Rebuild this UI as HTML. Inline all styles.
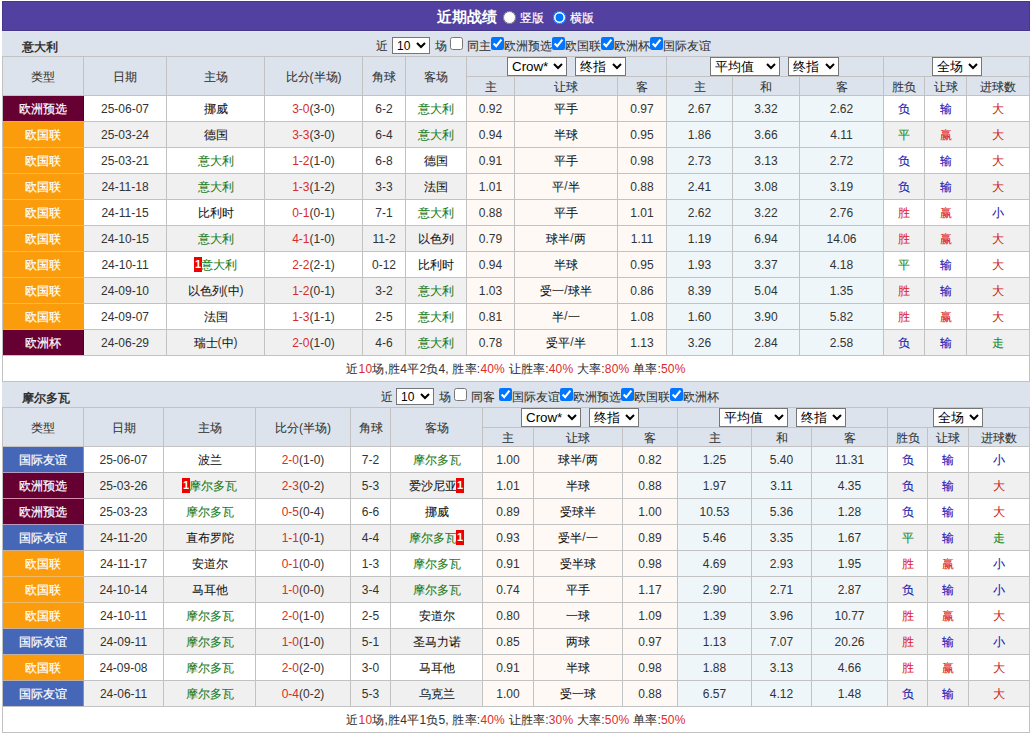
<!DOCTYPE html>
<html><head><meta charset="utf-8"><style>
html,body{margin:0;padding:0;background:#fff;width:1032px;height:734px;overflow:hidden;}
body{position:relative;font-family:'Liberation Sans', sans-serif;font-size:12px;color:#333;}
.b{position:absolute;box-sizing:border-box;white-space:nowrap;}
.k{-webkit-text-stroke:0.08px currentColor;}
.d{color:#151515;}
.dc .k{position:relative;top:1px;}
.w .k{-webkit-text-stroke:0.2px #fff;}
.s{position:absolute;margin:0;font-family:'Liberation Sans', sans-serif;font-size:13.33px;padding:0;box-sizing:border-box;background:#fff;}
.c{position:absolute;margin:0;width:13px;height:13px;}
.rc{display:inline-block;background:#ee0000;color:#fff;font-weight:bold;font-size:11px;line-height:15px;height:15px;width:8px;text-align:center;vertical-align:0px;position:relative;}
</style></head><body>
<div class="b" style="left:2px;top:1px;width:1028px;height:30px;background:#5241a0;border:1px solid #45388a;"></div>
<div class="b" style="left:437px;top:8px;font-size:15px;line-height:17px;font-weight:bold;color:#fff;-webkit-text-stroke:0;">近期战绩</div>
<input type="radio" class="c" style="left:503px;top:11px;">
<div class="b" style="left:520px;top:11px;font-size:12px;line-height:14px;color:#fff;-webkit-text-stroke:0.2px #fff;">竖版</div>
<input type="radio" checked class="c" style="left:553px;top:11px;">
<div class="b" style="left:570px;top:11px;font-size:12px;line-height:14px;color:#fff;-webkit-text-stroke:0.2px #fff;">横版</div>
<div class="b" style="left:2px;top:31px;width:1028px;height:25px;background:#dce3ec;"></div><div class="b" style="left:2px;top:31px;width:1028px;height:1px;background:#e4e6f6;"></div><div class="b" style="left:22px;top:40px;width:100px;height:14px;font-weight:bold;font-size:12px;color:#333;line-height:14px;-webkit-text-stroke:0;">意大利</div><div class="b" style="left:376px;top:39px;width:14px;height:14px;font-size:12px;line-height:14px;color:#333;"><span class="k">近</span></div><select class="s" style="left:392px;top:37px;width:38px;height:17px;font-size:12px;"><option>10</option></select><div class="b" style="left:435px;top:39px;width:14px;height:14px;font-size:12px;line-height:14px;color:#333;"><span class="k">场</span></div><input type="checkbox" class="c" style="left:450px;top:37px;"><div class="b" style="left:467px;top:39px;width:30px;height:14px;font-size:12px;line-height:14px;color:#333;"><span class="k">同主</span></div><input type="checkbox" checked class="c" style="left:491px;top:37px;"><div class="b" style="left:504px;top:39px;width:60px;height:14px;font-size:12px;line-height:14px;color:#333;"><span class="k">欧洲预选</span></div><input type="checkbox" checked class="c" style="left:552px;top:37px;"><div class="b" style="left:565px;top:39px;width:60px;height:14px;font-size:12px;line-height:14px;color:#333;"><span class="k">欧国联</span></div><input type="checkbox" checked class="c" style="left:601px;top:37px;"><div class="b" style="left:614px;top:39px;width:60px;height:14px;font-size:12px;line-height:14px;color:#333;"><span class="k">欧洲杯</span></div><input type="checkbox" checked class="c" style="left:650px;top:37px;"><div class="b" style="left:663px;top:39px;width:60px;height:14px;font-size:12px;line-height:14px;color:#333;"><span class="k">国际友谊</span></div><div class="b" style="left:2px;top:56px;width:1028px;height:39px;background:#dce3ec;"></div><div class="b" style="left:2px;top:56px;width:1028px;height:1px;background:#c2c2c2;"></div><div class="b" style="left:466px;top:76px;width:564px;height:1px;background:#c2c2c2;"></div><div class="b" style="left:2px;top:56px;width:1px;height:39px;background:#c2c2c2;"></div><div class="b" style="left:83px;top:56px;width:1px;height:39px;background:#c2c2c2;"></div><div class="b" style="left:166px;top:56px;width:1px;height:39px;background:#c2c2c2;"></div><div class="b" style="left:264px;top:56px;width:1px;height:39px;background:#c2c2c2;"></div><div class="b" style="left:362px;top:56px;width:1px;height:39px;background:#c2c2c2;"></div><div class="b" style="left:405px;top:56px;width:1px;height:39px;background:#c2c2c2;"></div><div class="b" style="left:466px;top:56px;width:1px;height:39px;background:#c2c2c2;"></div><div class="b" style="left:514px;top:76px;width:1px;height:19px;background:#c2c2c2;"></div><div class="b" style="left:617px;top:76px;width:1px;height:19px;background:#c2c2c2;"></div><div class="b" style="left:666px;top:56px;width:1px;height:39px;background:#c2c2c2;"></div><div class="b" style="left:732px;top:76px;width:1px;height:19px;background:#c2c2c2;"></div><div class="b" style="left:799px;top:76px;width:1px;height:19px;background:#c2c2c2;"></div><div class="b" style="left:883px;top:56px;width:1px;height:39px;background:#c2c2c2;"></div><div class="b" style="left:924px;top:76px;width:1px;height:19px;background:#c2c2c2;"></div><div class="b" style="left:966px;top:76px;width:1px;height:19px;background:#c2c2c2;"></div><div class="b" style="left:1029px;top:56px;width:1px;height:39px;background:#c2c2c2;"></div><div class="b" style="left:3px;top:58px;width:80px;height:38px;display:flex;align-items:center;justify-content:center;color:#333;font-size:12px;"><span><span class="k">类型</span></span></div><div class="b" style="left:84px;top:58px;width:82px;height:38px;display:flex;align-items:center;justify-content:center;color:#333;font-size:12px;"><span><span class="k">日期</span></span></div><div class="b" style="left:167px;top:58px;width:97px;height:38px;display:flex;align-items:center;justify-content:center;color:#333;font-size:12px;"><span><span class="k">主场</span></span></div><div class="b" style="left:265px;top:58px;width:97px;height:38px;display:flex;align-items:center;justify-content:center;color:#333;font-size:12px;"><span><span class="k">比分</span>(<span class="k">半场</span>)</span></div><div class="b" style="left:363px;top:58px;width:42px;height:38px;display:flex;align-items:center;justify-content:center;color:#333;font-size:12px;"><span><span class="k">角球</span></span></div><div class="b" style="left:406px;top:58px;width:60px;height:38px;display:flex;align-items:center;justify-content:center;color:#333;font-size:12px;"><span><span class="k">客场</span></span></div><select class="s hs" style="left:507px;top:57px;width:60px;height:19px;"><option>Crow*</option></select><select class="s hs" style="left:575px;top:57px;width:51px;height:19px;"><option>终指</option></select><select class="s hs" style="left:710px;top:57px;width:70px;height:19px;"><option>平均值</option></select><select class="s hs" style="left:788px;top:57px;width:51px;height:19px;"><option>终指</option></select><select class="s hs" style="left:932px;top:57px;width:50px;height:19px;"><option>全场</option></select><div class="b" style="left:467px;top:78px;width:47px;height:18px;display:flex;align-items:center;justify-content:center;color:#333;font-size:12px;"><span><span class="k">主</span></span></div><div class="b" style="left:515px;top:78px;width:102px;height:18px;display:flex;align-items:center;justify-content:center;color:#333;font-size:12px;"><span><span class="k">让球</span></span></div><div class="b" style="left:618px;top:78px;width:48px;height:18px;display:flex;align-items:center;justify-content:center;color:#333;font-size:12px;"><span><span class="k">客</span></span></div><div class="b" style="left:667px;top:78px;width:65px;height:18px;display:flex;align-items:center;justify-content:center;color:#333;font-size:12px;"><span><span class="k">主</span></span></div><div class="b" style="left:733px;top:78px;width:66px;height:18px;display:flex;align-items:center;justify-content:center;color:#333;font-size:12px;"><span><span class="k">和</span></span></div><div class="b" style="left:800px;top:78px;width:83px;height:18px;display:flex;align-items:center;justify-content:center;color:#333;font-size:12px;"><span><span class="k">客</span></span></div><div class="b" style="left:884px;top:78px;width:40px;height:18px;display:flex;align-items:center;justify-content:center;color:#333;font-size:12px;"><span><span class="k">胜负</span></span></div><div class="b" style="left:925px;top:78px;width:41px;height:18px;display:flex;align-items:center;justify-content:center;color:#333;font-size:12px;"><span><span class="k">让球</span></span></div><div class="b" style="left:967px;top:78px;width:62px;height:18px;display:flex;align-items:center;justify-content:center;color:#333;font-size:12px;"><span><span class="k">进球数</span></span></div><div class="b" style="left:2px;top:95px;width:1028px;height:1px;background:#c2c2c2;"></div><div class="b" style="left:2px;top:95px;width:1px;height:27px;background:#c2c2c2;"></div><div class="b" style="left:83px;top:95px;width:1px;height:27px;background:#c2c2c2;"></div><div class="b" style="left:166px;top:95px;width:1px;height:27px;background:#c2c2c2;"></div><div class="b" style="left:264px;top:95px;width:1px;height:27px;background:#c2c2c2;"></div><div class="b" style="left:362px;top:95px;width:1px;height:27px;background:#c2c2c2;"></div><div class="b" style="left:405px;top:95px;width:1px;height:27px;background:#c2c2c2;"></div><div class="b" style="left:466px;top:95px;width:1px;height:27px;background:#c2c2c2;"></div><div class="b" style="left:514px;top:95px;width:1px;height:27px;background:#c2c2c2;"></div><div class="b" style="left:617px;top:95px;width:1px;height:27px;background:#c2c2c2;"></div><div class="b" style="left:666px;top:95px;width:1px;height:27px;background:#c2c2c2;"></div><div class="b" style="left:732px;top:95px;width:1px;height:27px;background:#c2c2c2;"></div><div class="b" style="left:799px;top:95px;width:1px;height:27px;background:#c2c2c2;"></div><div class="b" style="left:883px;top:95px;width:1px;height:27px;background:#c2c2c2;"></div><div class="b" style="left:924px;top:95px;width:1px;height:27px;background:#c2c2c2;"></div><div class="b" style="left:966px;top:95px;width:1px;height:27px;background:#c2c2c2;"></div><div class="b" style="left:1029px;top:95px;width:1px;height:27px;background:#c2c2c2;"></div><div class="b dc w" style="left:3px;top:96px;width:80px;height:25px;background:#660033;color:#fff;display:flex;align-items:center;justify-content:center;font-size:12px;-webkit-text-stroke:0.25px #fff;"><span><span class="k">欧洲预选</span></span></div><div class="b" style="left:83px;top:96px;width:1px;height:25px;background:#4a0026;"></div><div class="b dc" style="left:84px;top:96px;width:82px;height:25px;background:#ffffff;color:#333;display:flex;align-items:center;justify-content:center;font-size:12px;"><span>25-06-07</span></div><div class="b dc" style="left:167px;top:96px;width:97px;height:25px;background:#ffffff;color:#333;display:flex;align-items:center;justify-content:center;font-size:12px;"><span><span style="color:#333"><span class="k d">挪威</span></span></span></div><div class="b dc" style="left:265px;top:96px;width:97px;height:25px;background:#ffffff;color:#333;display:flex;align-items:center;justify-content:center;font-size:12px;"><span><span style="color:#d82c2c">3-0</span>(3-0)</span></div><div class="b dc" style="left:363px;top:96px;width:42px;height:25px;background:#ffffff;color:#333;display:flex;align-items:center;justify-content:center;font-size:12px;"><span>6-2</span></div><div class="b dc" style="left:406px;top:96px;width:60px;height:25px;background:#ffffff;color:#333;display:flex;align-items:center;justify-content:center;font-size:12px;"><span><span style="color:#1a7a1a"><span class="k">意大利</span></span></span></div><div class="b dc" style="left:467px;top:96px;width:47px;height:25px;background:#fef9f5;color:#333;display:flex;align-items:center;justify-content:center;font-size:12px;"><span>0.92</span></div><div class="b dc" style="left:515px;top:96px;width:102px;height:25px;background:#fef9f5;color:#333;display:flex;align-items:center;justify-content:center;font-size:12px;"><span><span class="k d">平手</span></span></div><div class="b dc" style="left:618px;top:96px;width:48px;height:25px;background:#fef9f5;color:#333;display:flex;align-items:center;justify-content:center;font-size:12px;"><span>0.97</span></div><div class="b dc" style="left:667px;top:96px;width:65px;height:25px;background:#eff6fa;color:#333;display:flex;align-items:center;justify-content:center;font-size:12px;"><span>2.67</span></div><div class="b dc" style="left:733px;top:96px;width:66px;height:25px;background:#eff6fa;color:#333;display:flex;align-items:center;justify-content:center;font-size:12px;"><span>3.32</span></div><div class="b dc" style="left:800px;top:96px;width:83px;height:25px;background:#eff6fa;color:#333;display:flex;align-items:center;justify-content:center;font-size:12px;"><span>2.62</span></div><div class="b dc" style="left:884px;top:96px;width:40px;height:25px;background:#ffffff;color:#1111aa;display:flex;align-items:center;justify-content:center;font-size:12px;"><span><span class="k">负</span></span></div><div class="b dc" style="left:925px;top:96px;width:41px;height:25px;background:#ffffff;color:#1111bb;display:flex;align-items:center;justify-content:center;font-size:12px;"><span><span class="k">输</span></span></div><div class="b dc" style="left:967px;top:96px;width:62px;height:25px;background:#ffffff;color:#cc2222;display:flex;align-items:center;justify-content:center;font-size:12px;"><span><span class="k">大</span></span></div><div class="b" style="left:2px;top:121px;width:1028px;height:1px;background:#c2c2c2;"></div><div class="b" style="left:2px;top:121px;width:1px;height:27px;background:#c2c2c2;"></div><div class="b" style="left:83px;top:121px;width:1px;height:27px;background:#c2c2c2;"></div><div class="b" style="left:166px;top:121px;width:1px;height:27px;background:#c2c2c2;"></div><div class="b" style="left:264px;top:121px;width:1px;height:27px;background:#c2c2c2;"></div><div class="b" style="left:362px;top:121px;width:1px;height:27px;background:#c2c2c2;"></div><div class="b" style="left:405px;top:121px;width:1px;height:27px;background:#c2c2c2;"></div><div class="b" style="left:466px;top:121px;width:1px;height:27px;background:#c2c2c2;"></div><div class="b" style="left:514px;top:121px;width:1px;height:27px;background:#c2c2c2;"></div><div class="b" style="left:617px;top:121px;width:1px;height:27px;background:#c2c2c2;"></div><div class="b" style="left:666px;top:121px;width:1px;height:27px;background:#c2c2c2;"></div><div class="b" style="left:732px;top:121px;width:1px;height:27px;background:#c2c2c2;"></div><div class="b" style="left:799px;top:121px;width:1px;height:27px;background:#c2c2c2;"></div><div class="b" style="left:883px;top:121px;width:1px;height:27px;background:#c2c2c2;"></div><div class="b" style="left:924px;top:121px;width:1px;height:27px;background:#c2c2c2;"></div><div class="b" style="left:966px;top:121px;width:1px;height:27px;background:#c2c2c2;"></div><div class="b" style="left:1029px;top:121px;width:1px;height:27px;background:#c2c2c2;"></div><div class="b dc w" style="left:3px;top:122px;width:80px;height:25px;background:#fa9c0c;color:#fff;display:flex;align-items:center;justify-content:center;font-size:12px;-webkit-text-stroke:0.25px #fff;"><span><span class="k">欧国联</span></span></div><div class="b" style="left:83px;top:122px;width:1px;height:25px;background:#dba050;"></div><div class="b" style="left:3px;top:121px;width:81px;height:1px;background:#e4a285;"></div><div class="b dc" style="left:84px;top:122px;width:82px;height:25px;background:#f0f0f0;color:#333;display:flex;align-items:center;justify-content:center;font-size:12px;"><span>25-03-24</span></div><div class="b dc" style="left:167px;top:122px;width:97px;height:25px;background:#f0f0f0;color:#333;display:flex;align-items:center;justify-content:center;font-size:12px;"><span><span style="color:#333"><span class="k d">德国</span></span></span></div><div class="b dc" style="left:265px;top:122px;width:97px;height:25px;background:#f0f0f0;color:#333;display:flex;align-items:center;justify-content:center;font-size:12px;"><span><span style="color:#d82c2c">3-3</span>(3-0)</span></div><div class="b dc" style="left:363px;top:122px;width:42px;height:25px;background:#f0f0f0;color:#333;display:flex;align-items:center;justify-content:center;font-size:12px;"><span>6-4</span></div><div class="b dc" style="left:406px;top:122px;width:60px;height:25px;background:#f0f0f0;color:#333;display:flex;align-items:center;justify-content:center;font-size:12px;"><span><span style="color:#1a7a1a"><span class="k">意大利</span></span></span></div><div class="b dc" style="left:467px;top:122px;width:47px;height:25px;background:#fef9f5;color:#333;display:flex;align-items:center;justify-content:center;font-size:12px;"><span>0.94</span></div><div class="b dc" style="left:515px;top:122px;width:102px;height:25px;background:#fef9f5;color:#333;display:flex;align-items:center;justify-content:center;font-size:12px;"><span><span class="k d">半球</span></span></div><div class="b dc" style="left:618px;top:122px;width:48px;height:25px;background:#fef9f5;color:#333;display:flex;align-items:center;justify-content:center;font-size:12px;"><span>0.95</span></div><div class="b dc" style="left:667px;top:122px;width:65px;height:25px;background:#eff6fa;color:#333;display:flex;align-items:center;justify-content:center;font-size:12px;"><span>1.86</span></div><div class="b dc" style="left:733px;top:122px;width:66px;height:25px;background:#eff6fa;color:#333;display:flex;align-items:center;justify-content:center;font-size:12px;"><span>3.66</span></div><div class="b dc" style="left:800px;top:122px;width:83px;height:25px;background:#eff6fa;color:#333;display:flex;align-items:center;justify-content:center;font-size:12px;"><span>4.11</span></div><div class="b dc" style="left:884px;top:122px;width:40px;height:25px;background:#f0f0f0;color:#178817;display:flex;align-items:center;justify-content:center;font-size:12px;"><span><span class="k">平</span></span></div><div class="b dc" style="left:925px;top:122px;width:41px;height:25px;background:#f0f0f0;color:#dd2222;display:flex;align-items:center;justify-content:center;font-size:12px;"><span><span class="k">赢</span></span></div><div class="b dc" style="left:967px;top:122px;width:62px;height:25px;background:#f0f0f0;color:#cc2222;display:flex;align-items:center;justify-content:center;font-size:12px;"><span><span class="k">大</span></span></div><div class="b" style="left:2px;top:147px;width:1028px;height:1px;background:#c2c2c2;"></div><div class="b" style="left:2px;top:147px;width:1px;height:27px;background:#c2c2c2;"></div><div class="b" style="left:83px;top:147px;width:1px;height:27px;background:#c2c2c2;"></div><div class="b" style="left:166px;top:147px;width:1px;height:27px;background:#c2c2c2;"></div><div class="b" style="left:264px;top:147px;width:1px;height:27px;background:#c2c2c2;"></div><div class="b" style="left:362px;top:147px;width:1px;height:27px;background:#c2c2c2;"></div><div class="b" style="left:405px;top:147px;width:1px;height:27px;background:#c2c2c2;"></div><div class="b" style="left:466px;top:147px;width:1px;height:27px;background:#c2c2c2;"></div><div class="b" style="left:514px;top:147px;width:1px;height:27px;background:#c2c2c2;"></div><div class="b" style="left:617px;top:147px;width:1px;height:27px;background:#c2c2c2;"></div><div class="b" style="left:666px;top:147px;width:1px;height:27px;background:#c2c2c2;"></div><div class="b" style="left:732px;top:147px;width:1px;height:27px;background:#c2c2c2;"></div><div class="b" style="left:799px;top:147px;width:1px;height:27px;background:#c2c2c2;"></div><div class="b" style="left:883px;top:147px;width:1px;height:27px;background:#c2c2c2;"></div><div class="b" style="left:924px;top:147px;width:1px;height:27px;background:#c2c2c2;"></div><div class="b" style="left:966px;top:147px;width:1px;height:27px;background:#c2c2c2;"></div><div class="b" style="left:1029px;top:147px;width:1px;height:27px;background:#c2c2c2;"></div><div class="b dc w" style="left:3px;top:148px;width:80px;height:25px;background:#fa9c0c;color:#fff;display:flex;align-items:center;justify-content:center;font-size:12px;-webkit-text-stroke:0.25px #fff;"><span><span class="k">欧国联</span></span></div><div class="b" style="left:83px;top:148px;width:1px;height:25px;background:#dba050;"></div><div class="b" style="left:3px;top:147px;width:81px;height:1px;background:#f0b860;"></div><div class="b dc" style="left:84px;top:148px;width:82px;height:25px;background:#ffffff;color:#333;display:flex;align-items:center;justify-content:center;font-size:12px;"><span>25-03-21</span></div><div class="b dc" style="left:167px;top:148px;width:97px;height:25px;background:#ffffff;color:#333;display:flex;align-items:center;justify-content:center;font-size:12px;"><span><span style="color:#1a7a1a"><span class="k">意大利</span></span></span></div><div class="b dc" style="left:265px;top:148px;width:97px;height:25px;background:#ffffff;color:#333;display:flex;align-items:center;justify-content:center;font-size:12px;"><span><span style="color:#d82c2c">1-2</span>(1-0)</span></div><div class="b dc" style="left:363px;top:148px;width:42px;height:25px;background:#ffffff;color:#333;display:flex;align-items:center;justify-content:center;font-size:12px;"><span>6-8</span></div><div class="b dc" style="left:406px;top:148px;width:60px;height:25px;background:#ffffff;color:#333;display:flex;align-items:center;justify-content:center;font-size:12px;"><span><span style="color:#333"><span class="k d">德国</span></span></span></div><div class="b dc" style="left:467px;top:148px;width:47px;height:25px;background:#fef9f5;color:#333;display:flex;align-items:center;justify-content:center;font-size:12px;"><span>0.91</span></div><div class="b dc" style="left:515px;top:148px;width:102px;height:25px;background:#fef9f5;color:#333;display:flex;align-items:center;justify-content:center;font-size:12px;"><span><span class="k d">平手</span></span></div><div class="b dc" style="left:618px;top:148px;width:48px;height:25px;background:#fef9f5;color:#333;display:flex;align-items:center;justify-content:center;font-size:12px;"><span>0.98</span></div><div class="b dc" style="left:667px;top:148px;width:65px;height:25px;background:#eff6fa;color:#333;display:flex;align-items:center;justify-content:center;font-size:12px;"><span>2.73</span></div><div class="b dc" style="left:733px;top:148px;width:66px;height:25px;background:#eff6fa;color:#333;display:flex;align-items:center;justify-content:center;font-size:12px;"><span>3.13</span></div><div class="b dc" style="left:800px;top:148px;width:83px;height:25px;background:#eff6fa;color:#333;display:flex;align-items:center;justify-content:center;font-size:12px;"><span>2.72</span></div><div class="b dc" style="left:884px;top:148px;width:40px;height:25px;background:#ffffff;color:#1111aa;display:flex;align-items:center;justify-content:center;font-size:12px;"><span><span class="k">负</span></span></div><div class="b dc" style="left:925px;top:148px;width:41px;height:25px;background:#ffffff;color:#1111bb;display:flex;align-items:center;justify-content:center;font-size:12px;"><span><span class="k">输</span></span></div><div class="b dc" style="left:967px;top:148px;width:62px;height:25px;background:#ffffff;color:#cc2222;display:flex;align-items:center;justify-content:center;font-size:12px;"><span><span class="k">大</span></span></div><div class="b" style="left:2px;top:173px;width:1028px;height:1px;background:#c2c2c2;"></div><div class="b" style="left:2px;top:173px;width:1px;height:27px;background:#c2c2c2;"></div><div class="b" style="left:83px;top:173px;width:1px;height:27px;background:#c2c2c2;"></div><div class="b" style="left:166px;top:173px;width:1px;height:27px;background:#c2c2c2;"></div><div class="b" style="left:264px;top:173px;width:1px;height:27px;background:#c2c2c2;"></div><div class="b" style="left:362px;top:173px;width:1px;height:27px;background:#c2c2c2;"></div><div class="b" style="left:405px;top:173px;width:1px;height:27px;background:#c2c2c2;"></div><div class="b" style="left:466px;top:173px;width:1px;height:27px;background:#c2c2c2;"></div><div class="b" style="left:514px;top:173px;width:1px;height:27px;background:#c2c2c2;"></div><div class="b" style="left:617px;top:173px;width:1px;height:27px;background:#c2c2c2;"></div><div class="b" style="left:666px;top:173px;width:1px;height:27px;background:#c2c2c2;"></div><div class="b" style="left:732px;top:173px;width:1px;height:27px;background:#c2c2c2;"></div><div class="b" style="left:799px;top:173px;width:1px;height:27px;background:#c2c2c2;"></div><div class="b" style="left:883px;top:173px;width:1px;height:27px;background:#c2c2c2;"></div><div class="b" style="left:924px;top:173px;width:1px;height:27px;background:#c2c2c2;"></div><div class="b" style="left:966px;top:173px;width:1px;height:27px;background:#c2c2c2;"></div><div class="b" style="left:1029px;top:173px;width:1px;height:27px;background:#c2c2c2;"></div><div class="b dc w" style="left:3px;top:174px;width:80px;height:25px;background:#fa9c0c;color:#fff;display:flex;align-items:center;justify-content:center;font-size:12px;-webkit-text-stroke:0.25px #fff;"><span><span class="k">欧国联</span></span></div><div class="b" style="left:83px;top:174px;width:1px;height:25px;background:#dba050;"></div><div class="b" style="left:3px;top:173px;width:81px;height:1px;background:#f0b860;"></div><div class="b dc" style="left:84px;top:174px;width:82px;height:25px;background:#f0f0f0;color:#333;display:flex;align-items:center;justify-content:center;font-size:12px;"><span>24-11-18</span></div><div class="b dc" style="left:167px;top:174px;width:97px;height:25px;background:#f0f0f0;color:#333;display:flex;align-items:center;justify-content:center;font-size:12px;"><span><span style="color:#1a7a1a"><span class="k">意大利</span></span></span></div><div class="b dc" style="left:265px;top:174px;width:97px;height:25px;background:#f0f0f0;color:#333;display:flex;align-items:center;justify-content:center;font-size:12px;"><span><span style="color:#d82c2c">1-3</span>(1-2)</span></div><div class="b dc" style="left:363px;top:174px;width:42px;height:25px;background:#f0f0f0;color:#333;display:flex;align-items:center;justify-content:center;font-size:12px;"><span>3-3</span></div><div class="b dc" style="left:406px;top:174px;width:60px;height:25px;background:#f0f0f0;color:#333;display:flex;align-items:center;justify-content:center;font-size:12px;"><span><span style="color:#333"><span class="k d">法国</span></span></span></div><div class="b dc" style="left:467px;top:174px;width:47px;height:25px;background:#fef9f5;color:#333;display:flex;align-items:center;justify-content:center;font-size:12px;"><span>1.01</span></div><div class="b dc" style="left:515px;top:174px;width:102px;height:25px;background:#fef9f5;color:#333;display:flex;align-items:center;justify-content:center;font-size:12px;"><span><span class="k d">平</span>/<span class="k d">半</span></span></div><div class="b dc" style="left:618px;top:174px;width:48px;height:25px;background:#fef9f5;color:#333;display:flex;align-items:center;justify-content:center;font-size:12px;"><span>0.88</span></div><div class="b dc" style="left:667px;top:174px;width:65px;height:25px;background:#eff6fa;color:#333;display:flex;align-items:center;justify-content:center;font-size:12px;"><span>2.41</span></div><div class="b dc" style="left:733px;top:174px;width:66px;height:25px;background:#eff6fa;color:#333;display:flex;align-items:center;justify-content:center;font-size:12px;"><span>3.08</span></div><div class="b dc" style="left:800px;top:174px;width:83px;height:25px;background:#eff6fa;color:#333;display:flex;align-items:center;justify-content:center;font-size:12px;"><span>3.19</span></div><div class="b dc" style="left:884px;top:174px;width:40px;height:25px;background:#f0f0f0;color:#1111aa;display:flex;align-items:center;justify-content:center;font-size:12px;"><span><span class="k">负</span></span></div><div class="b dc" style="left:925px;top:174px;width:41px;height:25px;background:#f0f0f0;color:#1111bb;display:flex;align-items:center;justify-content:center;font-size:12px;"><span><span class="k">输</span></span></div><div class="b dc" style="left:967px;top:174px;width:62px;height:25px;background:#f0f0f0;color:#cc2222;display:flex;align-items:center;justify-content:center;font-size:12px;"><span><span class="k">大</span></span></div><div class="b" style="left:2px;top:199px;width:1028px;height:1px;background:#c2c2c2;"></div><div class="b" style="left:2px;top:199px;width:1px;height:27px;background:#c2c2c2;"></div><div class="b" style="left:83px;top:199px;width:1px;height:27px;background:#c2c2c2;"></div><div class="b" style="left:166px;top:199px;width:1px;height:27px;background:#c2c2c2;"></div><div class="b" style="left:264px;top:199px;width:1px;height:27px;background:#c2c2c2;"></div><div class="b" style="left:362px;top:199px;width:1px;height:27px;background:#c2c2c2;"></div><div class="b" style="left:405px;top:199px;width:1px;height:27px;background:#c2c2c2;"></div><div class="b" style="left:466px;top:199px;width:1px;height:27px;background:#c2c2c2;"></div><div class="b" style="left:514px;top:199px;width:1px;height:27px;background:#c2c2c2;"></div><div class="b" style="left:617px;top:199px;width:1px;height:27px;background:#c2c2c2;"></div><div class="b" style="left:666px;top:199px;width:1px;height:27px;background:#c2c2c2;"></div><div class="b" style="left:732px;top:199px;width:1px;height:27px;background:#c2c2c2;"></div><div class="b" style="left:799px;top:199px;width:1px;height:27px;background:#c2c2c2;"></div><div class="b" style="left:883px;top:199px;width:1px;height:27px;background:#c2c2c2;"></div><div class="b" style="left:924px;top:199px;width:1px;height:27px;background:#c2c2c2;"></div><div class="b" style="left:966px;top:199px;width:1px;height:27px;background:#c2c2c2;"></div><div class="b" style="left:1029px;top:199px;width:1px;height:27px;background:#c2c2c2;"></div><div class="b dc w" style="left:3px;top:200px;width:80px;height:25px;background:#fa9c0c;color:#fff;display:flex;align-items:center;justify-content:center;font-size:12px;-webkit-text-stroke:0.25px #fff;"><span><span class="k">欧国联</span></span></div><div class="b" style="left:83px;top:200px;width:1px;height:25px;background:#dba050;"></div><div class="b" style="left:3px;top:199px;width:81px;height:1px;background:#f0b860;"></div><div class="b dc" style="left:84px;top:200px;width:82px;height:25px;background:#ffffff;color:#333;display:flex;align-items:center;justify-content:center;font-size:12px;"><span>24-11-15</span></div><div class="b dc" style="left:167px;top:200px;width:97px;height:25px;background:#ffffff;color:#333;display:flex;align-items:center;justify-content:center;font-size:12px;"><span><span style="color:#333"><span class="k d">比利时</span></span></span></div><div class="b dc" style="left:265px;top:200px;width:97px;height:25px;background:#ffffff;color:#333;display:flex;align-items:center;justify-content:center;font-size:12px;"><span><span style="color:#d82c2c">0-1</span>(0-1)</span></div><div class="b dc" style="left:363px;top:200px;width:42px;height:25px;background:#ffffff;color:#333;display:flex;align-items:center;justify-content:center;font-size:12px;"><span>7-1</span></div><div class="b dc" style="left:406px;top:200px;width:60px;height:25px;background:#ffffff;color:#333;display:flex;align-items:center;justify-content:center;font-size:12px;"><span><span style="color:#1a7a1a"><span class="k">意大利</span></span></span></div><div class="b dc" style="left:467px;top:200px;width:47px;height:25px;background:#fef9f5;color:#333;display:flex;align-items:center;justify-content:center;font-size:12px;"><span>0.88</span></div><div class="b dc" style="left:515px;top:200px;width:102px;height:25px;background:#fef9f5;color:#333;display:flex;align-items:center;justify-content:center;font-size:12px;"><span><span class="k d">平手</span></span></div><div class="b dc" style="left:618px;top:200px;width:48px;height:25px;background:#fef9f5;color:#333;display:flex;align-items:center;justify-content:center;font-size:12px;"><span>1.01</span></div><div class="b dc" style="left:667px;top:200px;width:65px;height:25px;background:#eff6fa;color:#333;display:flex;align-items:center;justify-content:center;font-size:12px;"><span>2.62</span></div><div class="b dc" style="left:733px;top:200px;width:66px;height:25px;background:#eff6fa;color:#333;display:flex;align-items:center;justify-content:center;font-size:12px;"><span>3.22</span></div><div class="b dc" style="left:800px;top:200px;width:83px;height:25px;background:#eff6fa;color:#333;display:flex;align-items:center;justify-content:center;font-size:12px;"><span>2.76</span></div><div class="b dc" style="left:884px;top:200px;width:40px;height:25px;background:#ffffff;color:#dd2222;display:flex;align-items:center;justify-content:center;font-size:12px;"><span><span class="k">胜</span></span></div><div class="b dc" style="left:925px;top:200px;width:41px;height:25px;background:#ffffff;color:#dd2222;display:flex;align-items:center;justify-content:center;font-size:12px;"><span><span class="k">赢</span></span></div><div class="b dc" style="left:967px;top:200px;width:62px;height:25px;background:#ffffff;color:#1111aa;display:flex;align-items:center;justify-content:center;font-size:12px;"><span><span class="k">小</span></span></div><div class="b" style="left:2px;top:225px;width:1028px;height:1px;background:#c2c2c2;"></div><div class="b" style="left:2px;top:225px;width:1px;height:27px;background:#c2c2c2;"></div><div class="b" style="left:83px;top:225px;width:1px;height:27px;background:#c2c2c2;"></div><div class="b" style="left:166px;top:225px;width:1px;height:27px;background:#c2c2c2;"></div><div class="b" style="left:264px;top:225px;width:1px;height:27px;background:#c2c2c2;"></div><div class="b" style="left:362px;top:225px;width:1px;height:27px;background:#c2c2c2;"></div><div class="b" style="left:405px;top:225px;width:1px;height:27px;background:#c2c2c2;"></div><div class="b" style="left:466px;top:225px;width:1px;height:27px;background:#c2c2c2;"></div><div class="b" style="left:514px;top:225px;width:1px;height:27px;background:#c2c2c2;"></div><div class="b" style="left:617px;top:225px;width:1px;height:27px;background:#c2c2c2;"></div><div class="b" style="left:666px;top:225px;width:1px;height:27px;background:#c2c2c2;"></div><div class="b" style="left:732px;top:225px;width:1px;height:27px;background:#c2c2c2;"></div><div class="b" style="left:799px;top:225px;width:1px;height:27px;background:#c2c2c2;"></div><div class="b" style="left:883px;top:225px;width:1px;height:27px;background:#c2c2c2;"></div><div class="b" style="left:924px;top:225px;width:1px;height:27px;background:#c2c2c2;"></div><div class="b" style="left:966px;top:225px;width:1px;height:27px;background:#c2c2c2;"></div><div class="b" style="left:1029px;top:225px;width:1px;height:27px;background:#c2c2c2;"></div><div class="b dc w" style="left:3px;top:226px;width:80px;height:25px;background:#fa9c0c;color:#fff;display:flex;align-items:center;justify-content:center;font-size:12px;-webkit-text-stroke:0.25px #fff;"><span><span class="k">欧国联</span></span></div><div class="b" style="left:83px;top:226px;width:1px;height:25px;background:#dba050;"></div><div class="b" style="left:3px;top:225px;width:81px;height:1px;background:#f0b860;"></div><div class="b dc" style="left:84px;top:226px;width:82px;height:25px;background:#f0f0f0;color:#333;display:flex;align-items:center;justify-content:center;font-size:12px;"><span>24-10-15</span></div><div class="b dc" style="left:167px;top:226px;width:97px;height:25px;background:#f0f0f0;color:#333;display:flex;align-items:center;justify-content:center;font-size:12px;"><span><span style="color:#1a7a1a"><span class="k">意大利</span></span></span></div><div class="b dc" style="left:265px;top:226px;width:97px;height:25px;background:#f0f0f0;color:#333;display:flex;align-items:center;justify-content:center;font-size:12px;"><span><span style="color:#d82c2c">4-1</span>(1-0)</span></div><div class="b dc" style="left:363px;top:226px;width:42px;height:25px;background:#f0f0f0;color:#333;display:flex;align-items:center;justify-content:center;font-size:12px;"><span>11-2</span></div><div class="b dc" style="left:406px;top:226px;width:60px;height:25px;background:#f0f0f0;color:#333;display:flex;align-items:center;justify-content:center;font-size:12px;"><span><span style="color:#333"><span class="k d">以色列</span></span></span></div><div class="b dc" style="left:467px;top:226px;width:47px;height:25px;background:#fef9f5;color:#333;display:flex;align-items:center;justify-content:center;font-size:12px;"><span>0.79</span></div><div class="b dc" style="left:515px;top:226px;width:102px;height:25px;background:#fef9f5;color:#333;display:flex;align-items:center;justify-content:center;font-size:12px;"><span><span class="k d">球半</span>/<span class="k d">两</span></span></div><div class="b dc" style="left:618px;top:226px;width:48px;height:25px;background:#fef9f5;color:#333;display:flex;align-items:center;justify-content:center;font-size:12px;"><span>1.11</span></div><div class="b dc" style="left:667px;top:226px;width:65px;height:25px;background:#eff6fa;color:#333;display:flex;align-items:center;justify-content:center;font-size:12px;"><span>1.19</span></div><div class="b dc" style="left:733px;top:226px;width:66px;height:25px;background:#eff6fa;color:#333;display:flex;align-items:center;justify-content:center;font-size:12px;"><span>6.94</span></div><div class="b dc" style="left:800px;top:226px;width:83px;height:25px;background:#eff6fa;color:#333;display:flex;align-items:center;justify-content:center;font-size:12px;"><span>14.06</span></div><div class="b dc" style="left:884px;top:226px;width:40px;height:25px;background:#f0f0f0;color:#dd2222;display:flex;align-items:center;justify-content:center;font-size:12px;"><span><span class="k">胜</span></span></div><div class="b dc" style="left:925px;top:226px;width:41px;height:25px;background:#f0f0f0;color:#dd2222;display:flex;align-items:center;justify-content:center;font-size:12px;"><span><span class="k">赢</span></span></div><div class="b dc" style="left:967px;top:226px;width:62px;height:25px;background:#f0f0f0;color:#cc2222;display:flex;align-items:center;justify-content:center;font-size:12px;"><span><span class="k">大</span></span></div><div class="b" style="left:2px;top:251px;width:1028px;height:1px;background:#c2c2c2;"></div><div class="b" style="left:2px;top:251px;width:1px;height:27px;background:#c2c2c2;"></div><div class="b" style="left:83px;top:251px;width:1px;height:27px;background:#c2c2c2;"></div><div class="b" style="left:166px;top:251px;width:1px;height:27px;background:#c2c2c2;"></div><div class="b" style="left:264px;top:251px;width:1px;height:27px;background:#c2c2c2;"></div><div class="b" style="left:362px;top:251px;width:1px;height:27px;background:#c2c2c2;"></div><div class="b" style="left:405px;top:251px;width:1px;height:27px;background:#c2c2c2;"></div><div class="b" style="left:466px;top:251px;width:1px;height:27px;background:#c2c2c2;"></div><div class="b" style="left:514px;top:251px;width:1px;height:27px;background:#c2c2c2;"></div><div class="b" style="left:617px;top:251px;width:1px;height:27px;background:#c2c2c2;"></div><div class="b" style="left:666px;top:251px;width:1px;height:27px;background:#c2c2c2;"></div><div class="b" style="left:732px;top:251px;width:1px;height:27px;background:#c2c2c2;"></div><div class="b" style="left:799px;top:251px;width:1px;height:27px;background:#c2c2c2;"></div><div class="b" style="left:883px;top:251px;width:1px;height:27px;background:#c2c2c2;"></div><div class="b" style="left:924px;top:251px;width:1px;height:27px;background:#c2c2c2;"></div><div class="b" style="left:966px;top:251px;width:1px;height:27px;background:#c2c2c2;"></div><div class="b" style="left:1029px;top:251px;width:1px;height:27px;background:#c2c2c2;"></div><div class="b dc w" style="left:3px;top:252px;width:80px;height:25px;background:#fa9c0c;color:#fff;display:flex;align-items:center;justify-content:center;font-size:12px;-webkit-text-stroke:0.25px #fff;"><span><span class="k">欧国联</span></span></div><div class="b" style="left:83px;top:252px;width:1px;height:25px;background:#dba050;"></div><div class="b" style="left:3px;top:251px;width:81px;height:1px;background:#f0b860;"></div><div class="b dc" style="left:84px;top:252px;width:82px;height:25px;background:#ffffff;color:#333;display:flex;align-items:center;justify-content:center;font-size:12px;"><span>24-10-11</span></div><div class="b dc" style="left:167px;top:252px;width:97px;height:25px;background:#ffffff;color:#333;display:flex;align-items:center;justify-content:center;font-size:12px;"><span><span class="rc" style="margin-right:-1px">1</span><span style="color:#1a7a1a"><span class="k">意大利</span></span></span></div><div class="b dc" style="left:265px;top:252px;width:97px;height:25px;background:#ffffff;color:#333;display:flex;align-items:center;justify-content:center;font-size:12px;"><span><span style="color:#d82c2c">2-2</span>(2-1)</span></div><div class="b dc" style="left:363px;top:252px;width:42px;height:25px;background:#ffffff;color:#333;display:flex;align-items:center;justify-content:center;font-size:12px;"><span>0-12</span></div><div class="b dc" style="left:406px;top:252px;width:60px;height:25px;background:#ffffff;color:#333;display:flex;align-items:center;justify-content:center;font-size:12px;"><span><span style="color:#333"><span class="k d">比利时</span></span></span></div><div class="b dc" style="left:467px;top:252px;width:47px;height:25px;background:#fef9f5;color:#333;display:flex;align-items:center;justify-content:center;font-size:12px;"><span>0.94</span></div><div class="b dc" style="left:515px;top:252px;width:102px;height:25px;background:#fef9f5;color:#333;display:flex;align-items:center;justify-content:center;font-size:12px;"><span><span class="k d">半球</span></span></div><div class="b dc" style="left:618px;top:252px;width:48px;height:25px;background:#fef9f5;color:#333;display:flex;align-items:center;justify-content:center;font-size:12px;"><span>0.95</span></div><div class="b dc" style="left:667px;top:252px;width:65px;height:25px;background:#eff6fa;color:#333;display:flex;align-items:center;justify-content:center;font-size:12px;"><span>1.93</span></div><div class="b dc" style="left:733px;top:252px;width:66px;height:25px;background:#eff6fa;color:#333;display:flex;align-items:center;justify-content:center;font-size:12px;"><span>3.37</span></div><div class="b dc" style="left:800px;top:252px;width:83px;height:25px;background:#eff6fa;color:#333;display:flex;align-items:center;justify-content:center;font-size:12px;"><span>4.18</span></div><div class="b dc" style="left:884px;top:252px;width:40px;height:25px;background:#ffffff;color:#178817;display:flex;align-items:center;justify-content:center;font-size:12px;"><span><span class="k">平</span></span></div><div class="b dc" style="left:925px;top:252px;width:41px;height:25px;background:#ffffff;color:#1111bb;display:flex;align-items:center;justify-content:center;font-size:12px;"><span><span class="k">输</span></span></div><div class="b dc" style="left:967px;top:252px;width:62px;height:25px;background:#ffffff;color:#cc2222;display:flex;align-items:center;justify-content:center;font-size:12px;"><span><span class="k">大</span></span></div><div class="b" style="left:2px;top:277px;width:1028px;height:1px;background:#c2c2c2;"></div><div class="b" style="left:2px;top:277px;width:1px;height:27px;background:#c2c2c2;"></div><div class="b" style="left:83px;top:277px;width:1px;height:27px;background:#c2c2c2;"></div><div class="b" style="left:166px;top:277px;width:1px;height:27px;background:#c2c2c2;"></div><div class="b" style="left:264px;top:277px;width:1px;height:27px;background:#c2c2c2;"></div><div class="b" style="left:362px;top:277px;width:1px;height:27px;background:#c2c2c2;"></div><div class="b" style="left:405px;top:277px;width:1px;height:27px;background:#c2c2c2;"></div><div class="b" style="left:466px;top:277px;width:1px;height:27px;background:#c2c2c2;"></div><div class="b" style="left:514px;top:277px;width:1px;height:27px;background:#c2c2c2;"></div><div class="b" style="left:617px;top:277px;width:1px;height:27px;background:#c2c2c2;"></div><div class="b" style="left:666px;top:277px;width:1px;height:27px;background:#c2c2c2;"></div><div class="b" style="left:732px;top:277px;width:1px;height:27px;background:#c2c2c2;"></div><div class="b" style="left:799px;top:277px;width:1px;height:27px;background:#c2c2c2;"></div><div class="b" style="left:883px;top:277px;width:1px;height:27px;background:#c2c2c2;"></div><div class="b" style="left:924px;top:277px;width:1px;height:27px;background:#c2c2c2;"></div><div class="b" style="left:966px;top:277px;width:1px;height:27px;background:#c2c2c2;"></div><div class="b" style="left:1029px;top:277px;width:1px;height:27px;background:#c2c2c2;"></div><div class="b dc w" style="left:3px;top:278px;width:80px;height:25px;background:#fa9c0c;color:#fff;display:flex;align-items:center;justify-content:center;font-size:12px;-webkit-text-stroke:0.25px #fff;"><span><span class="k">欧国联</span></span></div><div class="b" style="left:83px;top:278px;width:1px;height:25px;background:#dba050;"></div><div class="b" style="left:3px;top:277px;width:81px;height:1px;background:#f0b860;"></div><div class="b dc" style="left:84px;top:278px;width:82px;height:25px;background:#f0f0f0;color:#333;display:flex;align-items:center;justify-content:center;font-size:12px;"><span>24-09-10</span></div><div class="b dc" style="left:167px;top:278px;width:97px;height:25px;background:#f0f0f0;color:#333;display:flex;align-items:center;justify-content:center;font-size:12px;"><span><span style="color:#333"><span class="k d">以色列</span>(<span class="k d">中</span>)</span></span></div><div class="b dc" style="left:265px;top:278px;width:97px;height:25px;background:#f0f0f0;color:#333;display:flex;align-items:center;justify-content:center;font-size:12px;"><span><span style="color:#d82c2c">1-2</span>(0-1)</span></div><div class="b dc" style="left:363px;top:278px;width:42px;height:25px;background:#f0f0f0;color:#333;display:flex;align-items:center;justify-content:center;font-size:12px;"><span>3-2</span></div><div class="b dc" style="left:406px;top:278px;width:60px;height:25px;background:#f0f0f0;color:#333;display:flex;align-items:center;justify-content:center;font-size:12px;"><span><span style="color:#1a7a1a"><span class="k">意大利</span></span></span></div><div class="b dc" style="left:467px;top:278px;width:47px;height:25px;background:#fef9f5;color:#333;display:flex;align-items:center;justify-content:center;font-size:12px;"><span>1.03</span></div><div class="b dc" style="left:515px;top:278px;width:102px;height:25px;background:#fef9f5;color:#333;display:flex;align-items:center;justify-content:center;font-size:12px;"><span><span class="k d">受一</span>/<span class="k d">球半</span></span></div><div class="b dc" style="left:618px;top:278px;width:48px;height:25px;background:#fef9f5;color:#333;display:flex;align-items:center;justify-content:center;font-size:12px;"><span>0.86</span></div><div class="b dc" style="left:667px;top:278px;width:65px;height:25px;background:#eff6fa;color:#333;display:flex;align-items:center;justify-content:center;font-size:12px;"><span>8.39</span></div><div class="b dc" style="left:733px;top:278px;width:66px;height:25px;background:#eff6fa;color:#333;display:flex;align-items:center;justify-content:center;font-size:12px;"><span>5.04</span></div><div class="b dc" style="left:800px;top:278px;width:83px;height:25px;background:#eff6fa;color:#333;display:flex;align-items:center;justify-content:center;font-size:12px;"><span>1.35</span></div><div class="b dc" style="left:884px;top:278px;width:40px;height:25px;background:#f0f0f0;color:#dd2222;display:flex;align-items:center;justify-content:center;font-size:12px;"><span><span class="k">胜</span></span></div><div class="b dc" style="left:925px;top:278px;width:41px;height:25px;background:#f0f0f0;color:#1111bb;display:flex;align-items:center;justify-content:center;font-size:12px;"><span><span class="k">输</span></span></div><div class="b dc" style="left:967px;top:278px;width:62px;height:25px;background:#f0f0f0;color:#cc2222;display:flex;align-items:center;justify-content:center;font-size:12px;"><span><span class="k">大</span></span></div><div class="b" style="left:2px;top:303px;width:1028px;height:1px;background:#c2c2c2;"></div><div class="b" style="left:2px;top:303px;width:1px;height:27px;background:#c2c2c2;"></div><div class="b" style="left:83px;top:303px;width:1px;height:27px;background:#c2c2c2;"></div><div class="b" style="left:166px;top:303px;width:1px;height:27px;background:#c2c2c2;"></div><div class="b" style="left:264px;top:303px;width:1px;height:27px;background:#c2c2c2;"></div><div class="b" style="left:362px;top:303px;width:1px;height:27px;background:#c2c2c2;"></div><div class="b" style="left:405px;top:303px;width:1px;height:27px;background:#c2c2c2;"></div><div class="b" style="left:466px;top:303px;width:1px;height:27px;background:#c2c2c2;"></div><div class="b" style="left:514px;top:303px;width:1px;height:27px;background:#c2c2c2;"></div><div class="b" style="left:617px;top:303px;width:1px;height:27px;background:#c2c2c2;"></div><div class="b" style="left:666px;top:303px;width:1px;height:27px;background:#c2c2c2;"></div><div class="b" style="left:732px;top:303px;width:1px;height:27px;background:#c2c2c2;"></div><div class="b" style="left:799px;top:303px;width:1px;height:27px;background:#c2c2c2;"></div><div class="b" style="left:883px;top:303px;width:1px;height:27px;background:#c2c2c2;"></div><div class="b" style="left:924px;top:303px;width:1px;height:27px;background:#c2c2c2;"></div><div class="b" style="left:966px;top:303px;width:1px;height:27px;background:#c2c2c2;"></div><div class="b" style="left:1029px;top:303px;width:1px;height:27px;background:#c2c2c2;"></div><div class="b dc w" style="left:3px;top:304px;width:80px;height:25px;background:#fa9c0c;color:#fff;display:flex;align-items:center;justify-content:center;font-size:12px;-webkit-text-stroke:0.25px #fff;"><span><span class="k">欧国联</span></span></div><div class="b" style="left:83px;top:304px;width:1px;height:25px;background:#dba050;"></div><div class="b" style="left:3px;top:303px;width:81px;height:1px;background:#f0b860;"></div><div class="b dc" style="left:84px;top:304px;width:82px;height:25px;background:#ffffff;color:#333;display:flex;align-items:center;justify-content:center;font-size:12px;"><span>24-09-07</span></div><div class="b dc" style="left:167px;top:304px;width:97px;height:25px;background:#ffffff;color:#333;display:flex;align-items:center;justify-content:center;font-size:12px;"><span><span style="color:#333"><span class="k d">法国</span></span></span></div><div class="b dc" style="left:265px;top:304px;width:97px;height:25px;background:#ffffff;color:#333;display:flex;align-items:center;justify-content:center;font-size:12px;"><span><span style="color:#d82c2c">1-3</span>(1-1)</span></div><div class="b dc" style="left:363px;top:304px;width:42px;height:25px;background:#ffffff;color:#333;display:flex;align-items:center;justify-content:center;font-size:12px;"><span>2-5</span></div><div class="b dc" style="left:406px;top:304px;width:60px;height:25px;background:#ffffff;color:#333;display:flex;align-items:center;justify-content:center;font-size:12px;"><span><span style="color:#1a7a1a"><span class="k">意大利</span></span></span></div><div class="b dc" style="left:467px;top:304px;width:47px;height:25px;background:#fef9f5;color:#333;display:flex;align-items:center;justify-content:center;font-size:12px;"><span>0.81</span></div><div class="b dc" style="left:515px;top:304px;width:102px;height:25px;background:#fef9f5;color:#333;display:flex;align-items:center;justify-content:center;font-size:12px;"><span><span class="k d">半</span>/<span class="k d">一</span></span></div><div class="b dc" style="left:618px;top:304px;width:48px;height:25px;background:#fef9f5;color:#333;display:flex;align-items:center;justify-content:center;font-size:12px;"><span>1.08</span></div><div class="b dc" style="left:667px;top:304px;width:65px;height:25px;background:#eff6fa;color:#333;display:flex;align-items:center;justify-content:center;font-size:12px;"><span>1.60</span></div><div class="b dc" style="left:733px;top:304px;width:66px;height:25px;background:#eff6fa;color:#333;display:flex;align-items:center;justify-content:center;font-size:12px;"><span>3.90</span></div><div class="b dc" style="left:800px;top:304px;width:83px;height:25px;background:#eff6fa;color:#333;display:flex;align-items:center;justify-content:center;font-size:12px;"><span>5.82</span></div><div class="b dc" style="left:884px;top:304px;width:40px;height:25px;background:#ffffff;color:#dd2222;display:flex;align-items:center;justify-content:center;font-size:12px;"><span><span class="k">胜</span></span></div><div class="b dc" style="left:925px;top:304px;width:41px;height:25px;background:#ffffff;color:#dd2222;display:flex;align-items:center;justify-content:center;font-size:12px;"><span><span class="k">赢</span></span></div><div class="b dc" style="left:967px;top:304px;width:62px;height:25px;background:#ffffff;color:#cc2222;display:flex;align-items:center;justify-content:center;font-size:12px;"><span><span class="k">大</span></span></div><div class="b" style="left:2px;top:329px;width:1028px;height:1px;background:#c2c2c2;"></div><div class="b" style="left:2px;top:329px;width:1px;height:27px;background:#c2c2c2;"></div><div class="b" style="left:83px;top:329px;width:1px;height:27px;background:#c2c2c2;"></div><div class="b" style="left:166px;top:329px;width:1px;height:27px;background:#c2c2c2;"></div><div class="b" style="left:264px;top:329px;width:1px;height:27px;background:#c2c2c2;"></div><div class="b" style="left:362px;top:329px;width:1px;height:27px;background:#c2c2c2;"></div><div class="b" style="left:405px;top:329px;width:1px;height:27px;background:#c2c2c2;"></div><div class="b" style="left:466px;top:329px;width:1px;height:27px;background:#c2c2c2;"></div><div class="b" style="left:514px;top:329px;width:1px;height:27px;background:#c2c2c2;"></div><div class="b" style="left:617px;top:329px;width:1px;height:27px;background:#c2c2c2;"></div><div class="b" style="left:666px;top:329px;width:1px;height:27px;background:#c2c2c2;"></div><div class="b" style="left:732px;top:329px;width:1px;height:27px;background:#c2c2c2;"></div><div class="b" style="left:799px;top:329px;width:1px;height:27px;background:#c2c2c2;"></div><div class="b" style="left:883px;top:329px;width:1px;height:27px;background:#c2c2c2;"></div><div class="b" style="left:924px;top:329px;width:1px;height:27px;background:#c2c2c2;"></div><div class="b" style="left:966px;top:329px;width:1px;height:27px;background:#c2c2c2;"></div><div class="b" style="left:1029px;top:329px;width:1px;height:27px;background:#c2c2c2;"></div><div class="b dc w" style="left:3px;top:330px;width:80px;height:25px;background:#660033;color:#fff;display:flex;align-items:center;justify-content:center;font-size:12px;-webkit-text-stroke:0.25px #fff;"><span><span class="k">欧洲杯</span></span></div><div class="b" style="left:83px;top:330px;width:1px;height:25px;background:#4a0026;"></div><div class="b" style="left:3px;top:329px;width:81px;height:1px;background:#e4a285;"></div><div class="b dc" style="left:84px;top:330px;width:82px;height:25px;background:#f0f0f0;color:#333;display:flex;align-items:center;justify-content:center;font-size:12px;"><span>24-06-29</span></div><div class="b dc" style="left:167px;top:330px;width:97px;height:25px;background:#f0f0f0;color:#333;display:flex;align-items:center;justify-content:center;font-size:12px;"><span><span style="color:#333"><span class="k d">瑞士</span>(<span class="k d">中</span>)</span></span></div><div class="b dc" style="left:265px;top:330px;width:97px;height:25px;background:#f0f0f0;color:#333;display:flex;align-items:center;justify-content:center;font-size:12px;"><span><span style="color:#d82c2c">2-0</span>(1-0)</span></div><div class="b dc" style="left:363px;top:330px;width:42px;height:25px;background:#f0f0f0;color:#333;display:flex;align-items:center;justify-content:center;font-size:12px;"><span>4-6</span></div><div class="b dc" style="left:406px;top:330px;width:60px;height:25px;background:#f0f0f0;color:#333;display:flex;align-items:center;justify-content:center;font-size:12px;"><span><span style="color:#1a7a1a"><span class="k">意大利</span></span></span></div><div class="b dc" style="left:467px;top:330px;width:47px;height:25px;background:#fef9f5;color:#333;display:flex;align-items:center;justify-content:center;font-size:12px;"><span>0.78</span></div><div class="b dc" style="left:515px;top:330px;width:102px;height:25px;background:#fef9f5;color:#333;display:flex;align-items:center;justify-content:center;font-size:12px;"><span><span class="k d">受平</span>/<span class="k d">半</span></span></div><div class="b dc" style="left:618px;top:330px;width:48px;height:25px;background:#fef9f5;color:#333;display:flex;align-items:center;justify-content:center;font-size:12px;"><span>1.13</span></div><div class="b dc" style="left:667px;top:330px;width:65px;height:25px;background:#eff6fa;color:#333;display:flex;align-items:center;justify-content:center;font-size:12px;"><span>3.26</span></div><div class="b dc" style="left:733px;top:330px;width:66px;height:25px;background:#eff6fa;color:#333;display:flex;align-items:center;justify-content:center;font-size:12px;"><span>2.84</span></div><div class="b dc" style="left:800px;top:330px;width:83px;height:25px;background:#eff6fa;color:#333;display:flex;align-items:center;justify-content:center;font-size:12px;"><span>2.58</span></div><div class="b dc" style="left:884px;top:330px;width:40px;height:25px;background:#f0f0f0;color:#1111aa;display:flex;align-items:center;justify-content:center;font-size:12px;"><span><span class="k">负</span></span></div><div class="b dc" style="left:925px;top:330px;width:41px;height:25px;background:#f0f0f0;color:#1111bb;display:flex;align-items:center;justify-content:center;font-size:12px;"><span><span class="k">输</span></span></div><div class="b dc" style="left:967px;top:330px;width:62px;height:25px;background:#f0f0f0;color:#178817;display:flex;align-items:center;justify-content:center;font-size:12px;"><span><span class="k">走</span></span></div><div class="b" style="left:2px;top:355px;width:1028px;height:1px;background:#c2c2c2;"></div><div class="b" style="left:2px;top:356px;width:1028px;height:25px;background:#fff;"></div><div class="b" style="left:2px;top:355px;width:1px;height:27px;background:#c2c2c2;"></div><div class="b" style="left:1029px;top:355px;width:1px;height:27px;background:#c2c2c2;"></div><div class="b" style="left:2px;top:381px;width:1028px;height:1px;background:#c2c2c2;"></div><div class="b" style="left:2px;top:357px;width:1028px;height:25px;display:flex;align-items:center;justify-content:center;color:#333;font-size:12px;letter-spacing:0.2px;"><span><span class="k">近</span><span style="color:#dd2a2a">10</span><span class="k">场</span>,<span class="k">胜</span>4<span class="k">平</span>2<span class="k">负</span>4, <span class="k">胜率</span>:<span style="color:#dd2a2a">40%</span> <span class="k">让胜率</span>:<span style="color:#dd2a2a">40%</span> <span class="k">大率</span>:<span style="color:#dd2a2a">80%</span> <span class="k">单率</span>:<span style="color:#dd2a2a">50%</span></span></div><div class="b" style="left:2px;top:382px;width:1028px;height:25px;background:#dce3ec;"></div><div class="b" style="left:22px;top:391px;width:100px;height:14px;font-weight:bold;font-size:12px;color:#333;line-height:14px;-webkit-text-stroke:0;">摩尔多瓦</div><div class="b" style="left:381px;top:390px;width:14px;height:14px;font-size:12px;line-height:14px;color:#333;"><span class="k">近</span></div><select class="s" style="left:396px;top:388px;width:38px;height:17px;font-size:12px;"><option>10</option></select><div class="b" style="left:439px;top:390px;width:14px;height:14px;font-size:12px;line-height:14px;color:#333;"><span class="k">场</span></div><input type="checkbox" class="c" style="left:454px;top:388px;"><div class="b" style="left:471px;top:390px;width:30px;height:14px;font-size:12px;line-height:14px;color:#333;"><span class="k">同客</span></div><input type="checkbox" checked class="c" style="left:499px;top:388px;"><div class="b" style="left:512px;top:390px;width:60px;height:14px;font-size:12px;line-height:14px;color:#333;"><span class="k">国际友谊</span></div><input type="checkbox" checked class="c" style="left:560px;top:388px;"><div class="b" style="left:573px;top:390px;width:60px;height:14px;font-size:12px;line-height:14px;color:#333;"><span class="k">欧洲预选</span></div><input type="checkbox" checked class="c" style="left:621px;top:388px;"><div class="b" style="left:634px;top:390px;width:60px;height:14px;font-size:12px;line-height:14px;color:#333;"><span class="k">欧国联</span></div><input type="checkbox" checked class="c" style="left:670px;top:388px;"><div class="b" style="left:683px;top:390px;width:60px;height:14px;font-size:12px;line-height:14px;color:#333;"><span class="k">欧洲杯</span></div><div class="b" style="left:2px;top:407px;width:1028px;height:39px;background:#dce3ec;"></div><div class="b" style="left:2px;top:407px;width:1028px;height:1px;background:#c2c2c2;"></div><div class="b" style="left:482px;top:427px;width:548px;height:1px;background:#c2c2c2;"></div><div class="b" style="left:2px;top:407px;width:1px;height:39px;background:#c2c2c2;"></div><div class="b" style="left:83px;top:407px;width:1px;height:39px;background:#c2c2c2;"></div><div class="b" style="left:163px;top:407px;width:1px;height:39px;background:#c2c2c2;"></div><div class="b" style="left:255px;top:407px;width:1px;height:39px;background:#c2c2c2;"></div><div class="b" style="left:350px;top:407px;width:1px;height:39px;background:#c2c2c2;"></div><div class="b" style="left:390px;top:407px;width:1px;height:39px;background:#c2c2c2;"></div><div class="b" style="left:482px;top:407px;width:1px;height:39px;background:#c2c2c2;"></div><div class="b" style="left:533px;top:427px;width:1px;height:19px;background:#c2c2c2;"></div><div class="b" style="left:622px;top:427px;width:1px;height:19px;background:#c2c2c2;"></div><div class="b" style="left:677px;top:407px;width:1px;height:39px;background:#c2c2c2;"></div><div class="b" style="left:751px;top:427px;width:1px;height:19px;background:#c2c2c2;"></div><div class="b" style="left:811px;top:427px;width:1px;height:19px;background:#c2c2c2;"></div><div class="b" style="left:887px;top:407px;width:1px;height:39px;background:#c2c2c2;"></div><div class="b" style="left:927px;top:427px;width:1px;height:19px;background:#c2c2c2;"></div><div class="b" style="left:968px;top:427px;width:1px;height:19px;background:#c2c2c2;"></div><div class="b" style="left:1029px;top:407px;width:1px;height:39px;background:#c2c2c2;"></div><div class="b" style="left:3px;top:409px;width:80px;height:38px;display:flex;align-items:center;justify-content:center;color:#333;font-size:12px;"><span><span class="k">类型</span></span></div><div class="b" style="left:84px;top:409px;width:79px;height:38px;display:flex;align-items:center;justify-content:center;color:#333;font-size:12px;"><span><span class="k">日期</span></span></div><div class="b" style="left:164px;top:409px;width:91px;height:38px;display:flex;align-items:center;justify-content:center;color:#333;font-size:12px;"><span><span class="k">主场</span></span></div><div class="b" style="left:256px;top:409px;width:94px;height:38px;display:flex;align-items:center;justify-content:center;color:#333;font-size:12px;"><span><span class="k">比分</span>(<span class="k">半场</span>)</span></div><div class="b" style="left:351px;top:409px;width:39px;height:38px;display:flex;align-items:center;justify-content:center;color:#333;font-size:12px;"><span><span class="k">角球</span></span></div><div class="b" style="left:391px;top:409px;width:91px;height:38px;display:flex;align-items:center;justify-content:center;color:#333;font-size:12px;"><span><span class="k">客场</span></span></div><select class="s hs" style="left:521px;top:408px;width:60px;height:19px;"><option>Crow*</option></select><select class="s hs" style="left:589px;top:408px;width:50px;height:19px;"><option>终指</option></select><select class="s hs" style="left:719px;top:408px;width:69px;height:19px;"><option>平均值</option></select><select class="s hs" style="left:796px;top:408px;width:50px;height:19px;"><option>终指</option></select><select class="s hs" style="left:933px;top:408px;width:50px;height:19px;"><option>全场</option></select><div class="b" style="left:483px;top:429px;width:50px;height:18px;display:flex;align-items:center;justify-content:center;color:#333;font-size:12px;"><span><span class="k">主</span></span></div><div class="b" style="left:534px;top:429px;width:88px;height:18px;display:flex;align-items:center;justify-content:center;color:#333;font-size:12px;"><span><span class="k">让球</span></span></div><div class="b" style="left:623px;top:429px;width:54px;height:18px;display:flex;align-items:center;justify-content:center;color:#333;font-size:12px;"><span><span class="k">客</span></span></div><div class="b" style="left:678px;top:429px;width:73px;height:18px;display:flex;align-items:center;justify-content:center;color:#333;font-size:12px;"><span><span class="k">主</span></span></div><div class="b" style="left:752px;top:429px;width:59px;height:18px;display:flex;align-items:center;justify-content:center;color:#333;font-size:12px;"><span><span class="k">和</span></span></div><div class="b" style="left:812px;top:429px;width:75px;height:18px;display:flex;align-items:center;justify-content:center;color:#333;font-size:12px;"><span><span class="k">客</span></span></div><div class="b" style="left:888px;top:429px;width:39px;height:18px;display:flex;align-items:center;justify-content:center;color:#333;font-size:12px;"><span><span class="k">胜负</span></span></div><div class="b" style="left:928px;top:429px;width:40px;height:18px;display:flex;align-items:center;justify-content:center;color:#333;font-size:12px;"><span><span class="k">让球</span></span></div><div class="b" style="left:969px;top:429px;width:60px;height:18px;display:flex;align-items:center;justify-content:center;color:#333;font-size:12px;"><span><span class="k">进球数</span></span></div><div class="b" style="left:2px;top:446px;width:1028px;height:1px;background:#c2c2c2;"></div><div class="b" style="left:2px;top:446px;width:1px;height:27px;background:#c2c2c2;"></div><div class="b" style="left:83px;top:446px;width:1px;height:27px;background:#c2c2c2;"></div><div class="b" style="left:163px;top:446px;width:1px;height:27px;background:#c2c2c2;"></div><div class="b" style="left:255px;top:446px;width:1px;height:27px;background:#c2c2c2;"></div><div class="b" style="left:350px;top:446px;width:1px;height:27px;background:#c2c2c2;"></div><div class="b" style="left:390px;top:446px;width:1px;height:27px;background:#c2c2c2;"></div><div class="b" style="left:482px;top:446px;width:1px;height:27px;background:#c2c2c2;"></div><div class="b" style="left:533px;top:446px;width:1px;height:27px;background:#c2c2c2;"></div><div class="b" style="left:622px;top:446px;width:1px;height:27px;background:#c2c2c2;"></div><div class="b" style="left:677px;top:446px;width:1px;height:27px;background:#c2c2c2;"></div><div class="b" style="left:751px;top:446px;width:1px;height:27px;background:#c2c2c2;"></div><div class="b" style="left:811px;top:446px;width:1px;height:27px;background:#c2c2c2;"></div><div class="b" style="left:887px;top:446px;width:1px;height:27px;background:#c2c2c2;"></div><div class="b" style="left:927px;top:446px;width:1px;height:27px;background:#c2c2c2;"></div><div class="b" style="left:968px;top:446px;width:1px;height:27px;background:#c2c2c2;"></div><div class="b" style="left:1029px;top:446px;width:1px;height:27px;background:#c2c2c2;"></div><div class="b dc w" style="left:3px;top:447px;width:80px;height:25px;background:#4666b8;color:#fff;display:flex;align-items:center;justify-content:center;font-size:12px;-webkit-text-stroke:0.25px #fff;"><span><span class="k">国际友谊</span></span></div><div class="b" style="left:83px;top:447px;width:1px;height:25px;background:#8090c0;"></div><div class="b dc" style="left:84px;top:447px;width:79px;height:25px;background:#ffffff;color:#333;display:flex;align-items:center;justify-content:center;font-size:12px;"><span>25-06-07</span></div><div class="b dc" style="left:164px;top:447px;width:91px;height:25px;background:#ffffff;color:#333;display:flex;align-items:center;justify-content:center;font-size:12px;"><span><span style="color:#333"><span class="k d">波兰</span></span></span></div><div class="b dc" style="left:256px;top:447px;width:94px;height:25px;background:#ffffff;color:#333;display:flex;align-items:center;justify-content:center;font-size:12px;"><span><span style="color:#d82c2c">2-0</span>(1-0)</span></div><div class="b dc" style="left:351px;top:447px;width:39px;height:25px;background:#ffffff;color:#333;display:flex;align-items:center;justify-content:center;font-size:12px;"><span>7-2</span></div><div class="b dc" style="left:391px;top:447px;width:91px;height:25px;background:#ffffff;color:#333;display:flex;align-items:center;justify-content:center;font-size:12px;"><span><span style="color:#1a7a1a"><span class="k">摩尔多瓦</span></span></span></div><div class="b dc" style="left:483px;top:447px;width:50px;height:25px;background:#fef9f5;color:#333;display:flex;align-items:center;justify-content:center;font-size:12px;"><span>1.00</span></div><div class="b dc" style="left:534px;top:447px;width:88px;height:25px;background:#fef9f5;color:#333;display:flex;align-items:center;justify-content:center;font-size:12px;"><span><span class="k d">球半</span>/<span class="k d">两</span></span></div><div class="b dc" style="left:623px;top:447px;width:54px;height:25px;background:#fef9f5;color:#333;display:flex;align-items:center;justify-content:center;font-size:12px;"><span>0.82</span></div><div class="b dc" style="left:678px;top:447px;width:73px;height:25px;background:#eff6fa;color:#333;display:flex;align-items:center;justify-content:center;font-size:12px;"><span>1.25</span></div><div class="b dc" style="left:752px;top:447px;width:59px;height:25px;background:#eff6fa;color:#333;display:flex;align-items:center;justify-content:center;font-size:12px;"><span>5.40</span></div><div class="b dc" style="left:812px;top:447px;width:75px;height:25px;background:#eff6fa;color:#333;display:flex;align-items:center;justify-content:center;font-size:12px;"><span>11.31</span></div><div class="b dc" style="left:888px;top:447px;width:39px;height:25px;background:#ffffff;color:#1111aa;display:flex;align-items:center;justify-content:center;font-size:12px;"><span><span class="k">负</span></span></div><div class="b dc" style="left:928px;top:447px;width:40px;height:25px;background:#ffffff;color:#1111bb;display:flex;align-items:center;justify-content:center;font-size:12px;"><span><span class="k">输</span></span></div><div class="b dc" style="left:969px;top:447px;width:60px;height:25px;background:#ffffff;color:#1111aa;display:flex;align-items:center;justify-content:center;font-size:12px;"><span><span class="k">小</span></span></div><div class="b" style="left:2px;top:472px;width:1028px;height:1px;background:#c2c2c2;"></div><div class="b" style="left:2px;top:472px;width:1px;height:27px;background:#c2c2c2;"></div><div class="b" style="left:83px;top:472px;width:1px;height:27px;background:#c2c2c2;"></div><div class="b" style="left:163px;top:472px;width:1px;height:27px;background:#c2c2c2;"></div><div class="b" style="left:255px;top:472px;width:1px;height:27px;background:#c2c2c2;"></div><div class="b" style="left:350px;top:472px;width:1px;height:27px;background:#c2c2c2;"></div><div class="b" style="left:390px;top:472px;width:1px;height:27px;background:#c2c2c2;"></div><div class="b" style="left:482px;top:472px;width:1px;height:27px;background:#c2c2c2;"></div><div class="b" style="left:533px;top:472px;width:1px;height:27px;background:#c2c2c2;"></div><div class="b" style="left:622px;top:472px;width:1px;height:27px;background:#c2c2c2;"></div><div class="b" style="left:677px;top:472px;width:1px;height:27px;background:#c2c2c2;"></div><div class="b" style="left:751px;top:472px;width:1px;height:27px;background:#c2c2c2;"></div><div class="b" style="left:811px;top:472px;width:1px;height:27px;background:#c2c2c2;"></div><div class="b" style="left:887px;top:472px;width:1px;height:27px;background:#c2c2c2;"></div><div class="b" style="left:927px;top:472px;width:1px;height:27px;background:#c2c2c2;"></div><div class="b" style="left:968px;top:472px;width:1px;height:27px;background:#c2c2c2;"></div><div class="b" style="left:1029px;top:472px;width:1px;height:27px;background:#c2c2c2;"></div><div class="b dc w" style="left:3px;top:473px;width:80px;height:25px;background:#660033;color:#fff;display:flex;align-items:center;justify-content:center;font-size:12px;-webkit-text-stroke:0.25px #fff;"><span><span class="k">欧洲预选</span></span></div><div class="b" style="left:83px;top:473px;width:1px;height:25px;background:#4a0026;"></div><div class="b" style="left:3px;top:472px;width:81px;height:1px;background:#b79bc0;"></div><div class="b dc" style="left:84px;top:473px;width:79px;height:25px;background:#f0f0f0;color:#333;display:flex;align-items:center;justify-content:center;font-size:12px;"><span>25-03-26</span></div><div class="b dc" style="left:164px;top:473px;width:91px;height:25px;background:#f0f0f0;color:#333;display:flex;align-items:center;justify-content:center;font-size:12px;"><span><span class="rc" style="margin-right:-1px">1</span><span style="color:#1a7a1a"><span class="k">摩尔多瓦</span></span></span></div><div class="b dc" style="left:256px;top:473px;width:94px;height:25px;background:#f0f0f0;color:#333;display:flex;align-items:center;justify-content:center;font-size:12px;"><span><span style="color:#d82c2c">2-3</span>(0-2)</span></div><div class="b dc" style="left:351px;top:473px;width:39px;height:25px;background:#f0f0f0;color:#333;display:flex;align-items:center;justify-content:center;font-size:12px;"><span>5-3</span></div><div class="b dc" style="left:391px;top:473px;width:91px;height:25px;background:#f0f0f0;color:#333;display:flex;align-items:center;justify-content:center;font-size:12px;"><span><span style="color:#333"><span class="k d">爱沙尼亚</span></span><span class="rc" style="margin-left:-1px">1</span></span></div><div class="b dc" style="left:483px;top:473px;width:50px;height:25px;background:#fef9f5;color:#333;display:flex;align-items:center;justify-content:center;font-size:12px;"><span>1.01</span></div><div class="b dc" style="left:534px;top:473px;width:88px;height:25px;background:#fef9f5;color:#333;display:flex;align-items:center;justify-content:center;font-size:12px;"><span><span class="k d">半球</span></span></div><div class="b dc" style="left:623px;top:473px;width:54px;height:25px;background:#fef9f5;color:#333;display:flex;align-items:center;justify-content:center;font-size:12px;"><span>0.88</span></div><div class="b dc" style="left:678px;top:473px;width:73px;height:25px;background:#eff6fa;color:#333;display:flex;align-items:center;justify-content:center;font-size:12px;"><span>1.97</span></div><div class="b dc" style="left:752px;top:473px;width:59px;height:25px;background:#eff6fa;color:#333;display:flex;align-items:center;justify-content:center;font-size:12px;"><span>3.11</span></div><div class="b dc" style="left:812px;top:473px;width:75px;height:25px;background:#eff6fa;color:#333;display:flex;align-items:center;justify-content:center;font-size:12px;"><span>4.35</span></div><div class="b dc" style="left:888px;top:473px;width:39px;height:25px;background:#f0f0f0;color:#1111aa;display:flex;align-items:center;justify-content:center;font-size:12px;"><span><span class="k">负</span></span></div><div class="b dc" style="left:928px;top:473px;width:40px;height:25px;background:#f0f0f0;color:#1111bb;display:flex;align-items:center;justify-content:center;font-size:12px;"><span><span class="k">输</span></span></div><div class="b dc" style="left:969px;top:473px;width:60px;height:25px;background:#f0f0f0;color:#cc2222;display:flex;align-items:center;justify-content:center;font-size:12px;"><span><span class="k">大</span></span></div><div class="b" style="left:2px;top:498px;width:1028px;height:1px;background:#c2c2c2;"></div><div class="b" style="left:2px;top:498px;width:1px;height:27px;background:#c2c2c2;"></div><div class="b" style="left:83px;top:498px;width:1px;height:27px;background:#c2c2c2;"></div><div class="b" style="left:163px;top:498px;width:1px;height:27px;background:#c2c2c2;"></div><div class="b" style="left:255px;top:498px;width:1px;height:27px;background:#c2c2c2;"></div><div class="b" style="left:350px;top:498px;width:1px;height:27px;background:#c2c2c2;"></div><div class="b" style="left:390px;top:498px;width:1px;height:27px;background:#c2c2c2;"></div><div class="b" style="left:482px;top:498px;width:1px;height:27px;background:#c2c2c2;"></div><div class="b" style="left:533px;top:498px;width:1px;height:27px;background:#c2c2c2;"></div><div class="b" style="left:622px;top:498px;width:1px;height:27px;background:#c2c2c2;"></div><div class="b" style="left:677px;top:498px;width:1px;height:27px;background:#c2c2c2;"></div><div class="b" style="left:751px;top:498px;width:1px;height:27px;background:#c2c2c2;"></div><div class="b" style="left:811px;top:498px;width:1px;height:27px;background:#c2c2c2;"></div><div class="b" style="left:887px;top:498px;width:1px;height:27px;background:#c2c2c2;"></div><div class="b" style="left:927px;top:498px;width:1px;height:27px;background:#c2c2c2;"></div><div class="b" style="left:968px;top:498px;width:1px;height:27px;background:#c2c2c2;"></div><div class="b" style="left:1029px;top:498px;width:1px;height:27px;background:#c2c2c2;"></div><div class="b dc w" style="left:3px;top:499px;width:80px;height:25px;background:#660033;color:#fff;display:flex;align-items:center;justify-content:center;font-size:12px;-webkit-text-stroke:0.25px #fff;"><span><span class="k">欧洲预选</span></span></div><div class="b" style="left:83px;top:499px;width:1px;height:25px;background:#4a0026;"></div><div class="b" style="left:3px;top:498px;width:81px;height:1px;background:#d88caa;"></div><div class="b dc" style="left:84px;top:499px;width:79px;height:25px;background:#ffffff;color:#333;display:flex;align-items:center;justify-content:center;font-size:12px;"><span>25-03-23</span></div><div class="b dc" style="left:164px;top:499px;width:91px;height:25px;background:#ffffff;color:#333;display:flex;align-items:center;justify-content:center;font-size:12px;"><span><span style="color:#1a7a1a"><span class="k">摩尔多瓦</span></span></span></div><div class="b dc" style="left:256px;top:499px;width:94px;height:25px;background:#ffffff;color:#333;display:flex;align-items:center;justify-content:center;font-size:12px;"><span><span style="color:#d82c2c">0-5</span>(0-4)</span></div><div class="b dc" style="left:351px;top:499px;width:39px;height:25px;background:#ffffff;color:#333;display:flex;align-items:center;justify-content:center;font-size:12px;"><span>6-6</span></div><div class="b dc" style="left:391px;top:499px;width:91px;height:25px;background:#ffffff;color:#333;display:flex;align-items:center;justify-content:center;font-size:12px;"><span><span style="color:#333"><span class="k d">挪威</span></span></span></div><div class="b dc" style="left:483px;top:499px;width:50px;height:25px;background:#fef9f5;color:#333;display:flex;align-items:center;justify-content:center;font-size:12px;"><span>0.89</span></div><div class="b dc" style="left:534px;top:499px;width:88px;height:25px;background:#fef9f5;color:#333;display:flex;align-items:center;justify-content:center;font-size:12px;"><span><span class="k d">受球半</span></span></div><div class="b dc" style="left:623px;top:499px;width:54px;height:25px;background:#fef9f5;color:#333;display:flex;align-items:center;justify-content:center;font-size:12px;"><span>1.00</span></div><div class="b dc" style="left:678px;top:499px;width:73px;height:25px;background:#eff6fa;color:#333;display:flex;align-items:center;justify-content:center;font-size:12px;"><span>10.53</span></div><div class="b dc" style="left:752px;top:499px;width:59px;height:25px;background:#eff6fa;color:#333;display:flex;align-items:center;justify-content:center;font-size:12px;"><span>5.36</span></div><div class="b dc" style="left:812px;top:499px;width:75px;height:25px;background:#eff6fa;color:#333;display:flex;align-items:center;justify-content:center;font-size:12px;"><span>1.28</span></div><div class="b dc" style="left:888px;top:499px;width:39px;height:25px;background:#ffffff;color:#1111aa;display:flex;align-items:center;justify-content:center;font-size:12px;"><span><span class="k">负</span></span></div><div class="b dc" style="left:928px;top:499px;width:40px;height:25px;background:#ffffff;color:#1111bb;display:flex;align-items:center;justify-content:center;font-size:12px;"><span><span class="k">输</span></span></div><div class="b dc" style="left:969px;top:499px;width:60px;height:25px;background:#ffffff;color:#cc2222;display:flex;align-items:center;justify-content:center;font-size:12px;"><span><span class="k">大</span></span></div><div class="b" style="left:2px;top:524px;width:1028px;height:1px;background:#c2c2c2;"></div><div class="b" style="left:2px;top:524px;width:1px;height:27px;background:#c2c2c2;"></div><div class="b" style="left:83px;top:524px;width:1px;height:27px;background:#c2c2c2;"></div><div class="b" style="left:163px;top:524px;width:1px;height:27px;background:#c2c2c2;"></div><div class="b" style="left:255px;top:524px;width:1px;height:27px;background:#c2c2c2;"></div><div class="b" style="left:350px;top:524px;width:1px;height:27px;background:#c2c2c2;"></div><div class="b" style="left:390px;top:524px;width:1px;height:27px;background:#c2c2c2;"></div><div class="b" style="left:482px;top:524px;width:1px;height:27px;background:#c2c2c2;"></div><div class="b" style="left:533px;top:524px;width:1px;height:27px;background:#c2c2c2;"></div><div class="b" style="left:622px;top:524px;width:1px;height:27px;background:#c2c2c2;"></div><div class="b" style="left:677px;top:524px;width:1px;height:27px;background:#c2c2c2;"></div><div class="b" style="left:751px;top:524px;width:1px;height:27px;background:#c2c2c2;"></div><div class="b" style="left:811px;top:524px;width:1px;height:27px;background:#c2c2c2;"></div><div class="b" style="left:887px;top:524px;width:1px;height:27px;background:#c2c2c2;"></div><div class="b" style="left:927px;top:524px;width:1px;height:27px;background:#c2c2c2;"></div><div class="b" style="left:968px;top:524px;width:1px;height:27px;background:#c2c2c2;"></div><div class="b" style="left:1029px;top:524px;width:1px;height:27px;background:#c2c2c2;"></div><div class="b dc w" style="left:3px;top:525px;width:80px;height:25px;background:#4666b8;color:#fff;display:flex;align-items:center;justify-content:center;font-size:12px;-webkit-text-stroke:0.25px #fff;"><span><span class="k">国际友谊</span></span></div><div class="b" style="left:83px;top:525px;width:1px;height:25px;background:#8090c0;"></div><div class="b" style="left:3px;top:524px;width:81px;height:1px;background:#b79bc0;"></div><div class="b dc" style="left:84px;top:525px;width:79px;height:25px;background:#f0f0f0;color:#333;display:flex;align-items:center;justify-content:center;font-size:12px;"><span>24-11-20</span></div><div class="b dc" style="left:164px;top:525px;width:91px;height:25px;background:#f0f0f0;color:#333;display:flex;align-items:center;justify-content:center;font-size:12px;"><span><span style="color:#333"><span class="k d">直布罗陀</span></span></span></div><div class="b dc" style="left:256px;top:525px;width:94px;height:25px;background:#f0f0f0;color:#333;display:flex;align-items:center;justify-content:center;font-size:12px;"><span><span style="color:#d82c2c">1-1</span>(0-1)</span></div><div class="b dc" style="left:351px;top:525px;width:39px;height:25px;background:#f0f0f0;color:#333;display:flex;align-items:center;justify-content:center;font-size:12px;"><span>4-4</span></div><div class="b dc" style="left:391px;top:525px;width:91px;height:25px;background:#f0f0f0;color:#333;display:flex;align-items:center;justify-content:center;font-size:12px;"><span><span style="color:#1a7a1a"><span class="k">摩尔多瓦</span></span><span class="rc" style="margin-left:-1px">1</span></span></div><div class="b dc" style="left:483px;top:525px;width:50px;height:25px;background:#fef9f5;color:#333;display:flex;align-items:center;justify-content:center;font-size:12px;"><span>0.93</span></div><div class="b dc" style="left:534px;top:525px;width:88px;height:25px;background:#fef9f5;color:#333;display:flex;align-items:center;justify-content:center;font-size:12px;"><span><span class="k d">受半</span>/<span class="k d">一</span></span></div><div class="b dc" style="left:623px;top:525px;width:54px;height:25px;background:#fef9f5;color:#333;display:flex;align-items:center;justify-content:center;font-size:12px;"><span>0.89</span></div><div class="b dc" style="left:678px;top:525px;width:73px;height:25px;background:#eff6fa;color:#333;display:flex;align-items:center;justify-content:center;font-size:12px;"><span>5.46</span></div><div class="b dc" style="left:752px;top:525px;width:59px;height:25px;background:#eff6fa;color:#333;display:flex;align-items:center;justify-content:center;font-size:12px;"><span>3.35</span></div><div class="b dc" style="left:812px;top:525px;width:75px;height:25px;background:#eff6fa;color:#333;display:flex;align-items:center;justify-content:center;font-size:12px;"><span>1.67</span></div><div class="b dc" style="left:888px;top:525px;width:39px;height:25px;background:#f0f0f0;color:#178817;display:flex;align-items:center;justify-content:center;font-size:12px;"><span><span class="k">平</span></span></div><div class="b dc" style="left:928px;top:525px;width:40px;height:25px;background:#f0f0f0;color:#1111bb;display:flex;align-items:center;justify-content:center;font-size:12px;"><span><span class="k">输</span></span></div><div class="b dc" style="left:969px;top:525px;width:60px;height:25px;background:#f0f0f0;color:#178817;display:flex;align-items:center;justify-content:center;font-size:12px;"><span><span class="k">走</span></span></div><div class="b" style="left:2px;top:550px;width:1028px;height:1px;background:#c2c2c2;"></div><div class="b" style="left:2px;top:550px;width:1px;height:27px;background:#c2c2c2;"></div><div class="b" style="left:83px;top:550px;width:1px;height:27px;background:#c2c2c2;"></div><div class="b" style="left:163px;top:550px;width:1px;height:27px;background:#c2c2c2;"></div><div class="b" style="left:255px;top:550px;width:1px;height:27px;background:#c2c2c2;"></div><div class="b" style="left:350px;top:550px;width:1px;height:27px;background:#c2c2c2;"></div><div class="b" style="left:390px;top:550px;width:1px;height:27px;background:#c2c2c2;"></div><div class="b" style="left:482px;top:550px;width:1px;height:27px;background:#c2c2c2;"></div><div class="b" style="left:533px;top:550px;width:1px;height:27px;background:#c2c2c2;"></div><div class="b" style="left:622px;top:550px;width:1px;height:27px;background:#c2c2c2;"></div><div class="b" style="left:677px;top:550px;width:1px;height:27px;background:#c2c2c2;"></div><div class="b" style="left:751px;top:550px;width:1px;height:27px;background:#c2c2c2;"></div><div class="b" style="left:811px;top:550px;width:1px;height:27px;background:#c2c2c2;"></div><div class="b" style="left:887px;top:550px;width:1px;height:27px;background:#c2c2c2;"></div><div class="b" style="left:927px;top:550px;width:1px;height:27px;background:#c2c2c2;"></div><div class="b" style="left:968px;top:550px;width:1px;height:27px;background:#c2c2c2;"></div><div class="b" style="left:1029px;top:550px;width:1px;height:27px;background:#c2c2c2;"></div><div class="b dc w" style="left:3px;top:551px;width:80px;height:25px;background:#fa9c0c;color:#fff;display:flex;align-items:center;justify-content:center;font-size:12px;-webkit-text-stroke:0.25px #fff;"><span><span class="k">欧国联</span></span></div><div class="b" style="left:83px;top:551px;width:1px;height:25px;background:#dba050;"></div><div class="b" style="left:3px;top:550px;width:81px;height:1px;background:#c3b19b;"></div><div class="b dc" style="left:84px;top:551px;width:79px;height:25px;background:#ffffff;color:#333;display:flex;align-items:center;justify-content:center;font-size:12px;"><span>24-11-17</span></div><div class="b dc" style="left:164px;top:551px;width:91px;height:25px;background:#ffffff;color:#333;display:flex;align-items:center;justify-content:center;font-size:12px;"><span><span style="color:#333"><span class="k d">安道尔</span></span></span></div><div class="b dc" style="left:256px;top:551px;width:94px;height:25px;background:#ffffff;color:#333;display:flex;align-items:center;justify-content:center;font-size:12px;"><span><span style="color:#d82c2c">0-1</span>(0-0)</span></div><div class="b dc" style="left:351px;top:551px;width:39px;height:25px;background:#ffffff;color:#333;display:flex;align-items:center;justify-content:center;font-size:12px;"><span>1-3</span></div><div class="b dc" style="left:391px;top:551px;width:91px;height:25px;background:#ffffff;color:#333;display:flex;align-items:center;justify-content:center;font-size:12px;"><span><span style="color:#1a7a1a"><span class="k">摩尔多瓦</span></span></span></div><div class="b dc" style="left:483px;top:551px;width:50px;height:25px;background:#fef9f5;color:#333;display:flex;align-items:center;justify-content:center;font-size:12px;"><span>0.91</span></div><div class="b dc" style="left:534px;top:551px;width:88px;height:25px;background:#fef9f5;color:#333;display:flex;align-items:center;justify-content:center;font-size:12px;"><span><span class="k d">受半球</span></span></div><div class="b dc" style="left:623px;top:551px;width:54px;height:25px;background:#fef9f5;color:#333;display:flex;align-items:center;justify-content:center;font-size:12px;"><span>0.98</span></div><div class="b dc" style="left:678px;top:551px;width:73px;height:25px;background:#eff6fa;color:#333;display:flex;align-items:center;justify-content:center;font-size:12px;"><span>4.69</span></div><div class="b dc" style="left:752px;top:551px;width:59px;height:25px;background:#eff6fa;color:#333;display:flex;align-items:center;justify-content:center;font-size:12px;"><span>2.93</span></div><div class="b dc" style="left:812px;top:551px;width:75px;height:25px;background:#eff6fa;color:#333;display:flex;align-items:center;justify-content:center;font-size:12px;"><span>1.95</span></div><div class="b dc" style="left:888px;top:551px;width:39px;height:25px;background:#ffffff;color:#dd2222;display:flex;align-items:center;justify-content:center;font-size:12px;"><span><span class="k">胜</span></span></div><div class="b dc" style="left:928px;top:551px;width:40px;height:25px;background:#ffffff;color:#dd2222;display:flex;align-items:center;justify-content:center;font-size:12px;"><span><span class="k">赢</span></span></div><div class="b dc" style="left:969px;top:551px;width:60px;height:25px;background:#ffffff;color:#1111aa;display:flex;align-items:center;justify-content:center;font-size:12px;"><span><span class="k">小</span></span></div><div class="b" style="left:2px;top:576px;width:1028px;height:1px;background:#c2c2c2;"></div><div class="b" style="left:2px;top:576px;width:1px;height:27px;background:#c2c2c2;"></div><div class="b" style="left:83px;top:576px;width:1px;height:27px;background:#c2c2c2;"></div><div class="b" style="left:163px;top:576px;width:1px;height:27px;background:#c2c2c2;"></div><div class="b" style="left:255px;top:576px;width:1px;height:27px;background:#c2c2c2;"></div><div class="b" style="left:350px;top:576px;width:1px;height:27px;background:#c2c2c2;"></div><div class="b" style="left:390px;top:576px;width:1px;height:27px;background:#c2c2c2;"></div><div class="b" style="left:482px;top:576px;width:1px;height:27px;background:#c2c2c2;"></div><div class="b" style="left:533px;top:576px;width:1px;height:27px;background:#c2c2c2;"></div><div class="b" style="left:622px;top:576px;width:1px;height:27px;background:#c2c2c2;"></div><div class="b" style="left:677px;top:576px;width:1px;height:27px;background:#c2c2c2;"></div><div class="b" style="left:751px;top:576px;width:1px;height:27px;background:#c2c2c2;"></div><div class="b" style="left:811px;top:576px;width:1px;height:27px;background:#c2c2c2;"></div><div class="b" style="left:887px;top:576px;width:1px;height:27px;background:#c2c2c2;"></div><div class="b" style="left:927px;top:576px;width:1px;height:27px;background:#c2c2c2;"></div><div class="b" style="left:968px;top:576px;width:1px;height:27px;background:#c2c2c2;"></div><div class="b" style="left:1029px;top:576px;width:1px;height:27px;background:#c2c2c2;"></div><div class="b dc w" style="left:3px;top:577px;width:80px;height:25px;background:#fa9c0c;color:#fff;display:flex;align-items:center;justify-content:center;font-size:12px;-webkit-text-stroke:0.25px #fff;"><span><span class="k">欧国联</span></span></div><div class="b" style="left:83px;top:577px;width:1px;height:25px;background:#dba050;"></div><div class="b" style="left:3px;top:576px;width:81px;height:1px;background:#f0b860;"></div><div class="b dc" style="left:84px;top:577px;width:79px;height:25px;background:#f0f0f0;color:#333;display:flex;align-items:center;justify-content:center;font-size:12px;"><span>24-10-14</span></div><div class="b dc" style="left:164px;top:577px;width:91px;height:25px;background:#f0f0f0;color:#333;display:flex;align-items:center;justify-content:center;font-size:12px;"><span><span style="color:#333"><span class="k d">马耳他</span></span></span></div><div class="b dc" style="left:256px;top:577px;width:94px;height:25px;background:#f0f0f0;color:#333;display:flex;align-items:center;justify-content:center;font-size:12px;"><span><span style="color:#d82c2c">1-0</span>(0-0)</span></div><div class="b dc" style="left:351px;top:577px;width:39px;height:25px;background:#f0f0f0;color:#333;display:flex;align-items:center;justify-content:center;font-size:12px;"><span>3-4</span></div><div class="b dc" style="left:391px;top:577px;width:91px;height:25px;background:#f0f0f0;color:#333;display:flex;align-items:center;justify-content:center;font-size:12px;"><span><span style="color:#1a7a1a"><span class="k">摩尔多瓦</span></span></span></div><div class="b dc" style="left:483px;top:577px;width:50px;height:25px;background:#fef9f5;color:#333;display:flex;align-items:center;justify-content:center;font-size:12px;"><span>0.74</span></div><div class="b dc" style="left:534px;top:577px;width:88px;height:25px;background:#fef9f5;color:#333;display:flex;align-items:center;justify-content:center;font-size:12px;"><span><span class="k d">平手</span></span></div><div class="b dc" style="left:623px;top:577px;width:54px;height:25px;background:#fef9f5;color:#333;display:flex;align-items:center;justify-content:center;font-size:12px;"><span>1.17</span></div><div class="b dc" style="left:678px;top:577px;width:73px;height:25px;background:#eff6fa;color:#333;display:flex;align-items:center;justify-content:center;font-size:12px;"><span>2.90</span></div><div class="b dc" style="left:752px;top:577px;width:59px;height:25px;background:#eff6fa;color:#333;display:flex;align-items:center;justify-content:center;font-size:12px;"><span>2.71</span></div><div class="b dc" style="left:812px;top:577px;width:75px;height:25px;background:#eff6fa;color:#333;display:flex;align-items:center;justify-content:center;font-size:12px;"><span>2.87</span></div><div class="b dc" style="left:888px;top:577px;width:39px;height:25px;background:#f0f0f0;color:#1111aa;display:flex;align-items:center;justify-content:center;font-size:12px;"><span><span class="k">负</span></span></div><div class="b dc" style="left:928px;top:577px;width:40px;height:25px;background:#f0f0f0;color:#1111bb;display:flex;align-items:center;justify-content:center;font-size:12px;"><span><span class="k">输</span></span></div><div class="b dc" style="left:969px;top:577px;width:60px;height:25px;background:#f0f0f0;color:#1111aa;display:flex;align-items:center;justify-content:center;font-size:12px;"><span><span class="k">小</span></span></div><div class="b" style="left:2px;top:602px;width:1028px;height:1px;background:#c2c2c2;"></div><div class="b" style="left:2px;top:602px;width:1px;height:27px;background:#c2c2c2;"></div><div class="b" style="left:83px;top:602px;width:1px;height:27px;background:#c2c2c2;"></div><div class="b" style="left:163px;top:602px;width:1px;height:27px;background:#c2c2c2;"></div><div class="b" style="left:255px;top:602px;width:1px;height:27px;background:#c2c2c2;"></div><div class="b" style="left:350px;top:602px;width:1px;height:27px;background:#c2c2c2;"></div><div class="b" style="left:390px;top:602px;width:1px;height:27px;background:#c2c2c2;"></div><div class="b" style="left:482px;top:602px;width:1px;height:27px;background:#c2c2c2;"></div><div class="b" style="left:533px;top:602px;width:1px;height:27px;background:#c2c2c2;"></div><div class="b" style="left:622px;top:602px;width:1px;height:27px;background:#c2c2c2;"></div><div class="b" style="left:677px;top:602px;width:1px;height:27px;background:#c2c2c2;"></div><div class="b" style="left:751px;top:602px;width:1px;height:27px;background:#c2c2c2;"></div><div class="b" style="left:811px;top:602px;width:1px;height:27px;background:#c2c2c2;"></div><div class="b" style="left:887px;top:602px;width:1px;height:27px;background:#c2c2c2;"></div><div class="b" style="left:927px;top:602px;width:1px;height:27px;background:#c2c2c2;"></div><div class="b" style="left:968px;top:602px;width:1px;height:27px;background:#c2c2c2;"></div><div class="b" style="left:1029px;top:602px;width:1px;height:27px;background:#c2c2c2;"></div><div class="b dc w" style="left:3px;top:603px;width:80px;height:25px;background:#fa9c0c;color:#fff;display:flex;align-items:center;justify-content:center;font-size:12px;-webkit-text-stroke:0.25px #fff;"><span><span class="k">欧国联</span></span></div><div class="b" style="left:83px;top:603px;width:1px;height:25px;background:#dba050;"></div><div class="b" style="left:3px;top:602px;width:81px;height:1px;background:#f0b860;"></div><div class="b dc" style="left:84px;top:603px;width:79px;height:25px;background:#ffffff;color:#333;display:flex;align-items:center;justify-content:center;font-size:12px;"><span>24-10-11</span></div><div class="b dc" style="left:164px;top:603px;width:91px;height:25px;background:#ffffff;color:#333;display:flex;align-items:center;justify-content:center;font-size:12px;"><span><span style="color:#1a7a1a"><span class="k">摩尔多瓦</span></span></span></div><div class="b dc" style="left:256px;top:603px;width:94px;height:25px;background:#ffffff;color:#333;display:flex;align-items:center;justify-content:center;font-size:12px;"><span><span style="color:#d82c2c">2-0</span>(1-0)</span></div><div class="b dc" style="left:351px;top:603px;width:39px;height:25px;background:#ffffff;color:#333;display:flex;align-items:center;justify-content:center;font-size:12px;"><span>2-5</span></div><div class="b dc" style="left:391px;top:603px;width:91px;height:25px;background:#ffffff;color:#333;display:flex;align-items:center;justify-content:center;font-size:12px;"><span><span style="color:#333"><span class="k d">安道尔</span></span></span></div><div class="b dc" style="left:483px;top:603px;width:50px;height:25px;background:#fef9f5;color:#333;display:flex;align-items:center;justify-content:center;font-size:12px;"><span>0.80</span></div><div class="b dc" style="left:534px;top:603px;width:88px;height:25px;background:#fef9f5;color:#333;display:flex;align-items:center;justify-content:center;font-size:12px;"><span><span class="k d">一球</span></span></div><div class="b dc" style="left:623px;top:603px;width:54px;height:25px;background:#fef9f5;color:#333;display:flex;align-items:center;justify-content:center;font-size:12px;"><span>1.09</span></div><div class="b dc" style="left:678px;top:603px;width:73px;height:25px;background:#eff6fa;color:#333;display:flex;align-items:center;justify-content:center;font-size:12px;"><span>1.39</span></div><div class="b dc" style="left:752px;top:603px;width:59px;height:25px;background:#eff6fa;color:#333;display:flex;align-items:center;justify-content:center;font-size:12px;"><span>3.96</span></div><div class="b dc" style="left:812px;top:603px;width:75px;height:25px;background:#eff6fa;color:#333;display:flex;align-items:center;justify-content:center;font-size:12px;"><span>10.77</span></div><div class="b dc" style="left:888px;top:603px;width:39px;height:25px;background:#ffffff;color:#dd2222;display:flex;align-items:center;justify-content:center;font-size:12px;"><span><span class="k">胜</span></span></div><div class="b dc" style="left:928px;top:603px;width:40px;height:25px;background:#ffffff;color:#dd2222;display:flex;align-items:center;justify-content:center;font-size:12px;"><span><span class="k">赢</span></span></div><div class="b dc" style="left:969px;top:603px;width:60px;height:25px;background:#ffffff;color:#cc2222;display:flex;align-items:center;justify-content:center;font-size:12px;"><span><span class="k">大</span></span></div><div class="b" style="left:2px;top:628px;width:1028px;height:1px;background:#c2c2c2;"></div><div class="b" style="left:2px;top:628px;width:1px;height:27px;background:#c2c2c2;"></div><div class="b" style="left:83px;top:628px;width:1px;height:27px;background:#c2c2c2;"></div><div class="b" style="left:163px;top:628px;width:1px;height:27px;background:#c2c2c2;"></div><div class="b" style="left:255px;top:628px;width:1px;height:27px;background:#c2c2c2;"></div><div class="b" style="left:350px;top:628px;width:1px;height:27px;background:#c2c2c2;"></div><div class="b" style="left:390px;top:628px;width:1px;height:27px;background:#c2c2c2;"></div><div class="b" style="left:482px;top:628px;width:1px;height:27px;background:#c2c2c2;"></div><div class="b" style="left:533px;top:628px;width:1px;height:27px;background:#c2c2c2;"></div><div class="b" style="left:622px;top:628px;width:1px;height:27px;background:#c2c2c2;"></div><div class="b" style="left:677px;top:628px;width:1px;height:27px;background:#c2c2c2;"></div><div class="b" style="left:751px;top:628px;width:1px;height:27px;background:#c2c2c2;"></div><div class="b" style="left:811px;top:628px;width:1px;height:27px;background:#c2c2c2;"></div><div class="b" style="left:887px;top:628px;width:1px;height:27px;background:#c2c2c2;"></div><div class="b" style="left:927px;top:628px;width:1px;height:27px;background:#c2c2c2;"></div><div class="b" style="left:968px;top:628px;width:1px;height:27px;background:#c2c2c2;"></div><div class="b" style="left:1029px;top:628px;width:1px;height:27px;background:#c2c2c2;"></div><div class="b dc w" style="left:3px;top:629px;width:80px;height:25px;background:#4666b8;color:#fff;display:flex;align-items:center;justify-content:center;font-size:12px;-webkit-text-stroke:0.25px #fff;"><span><span class="k">国际友谊</span></span></div><div class="b" style="left:83px;top:629px;width:1px;height:25px;background:#8090c0;"></div><div class="b" style="left:3px;top:628px;width:81px;height:1px;background:#c3b19b;"></div><div class="b dc" style="left:84px;top:629px;width:79px;height:25px;background:#f0f0f0;color:#333;display:flex;align-items:center;justify-content:center;font-size:12px;"><span>24-09-11</span></div><div class="b dc" style="left:164px;top:629px;width:91px;height:25px;background:#f0f0f0;color:#333;display:flex;align-items:center;justify-content:center;font-size:12px;"><span><span style="color:#1a7a1a"><span class="k">摩尔多瓦</span></span></span></div><div class="b dc" style="left:256px;top:629px;width:94px;height:25px;background:#f0f0f0;color:#333;display:flex;align-items:center;justify-content:center;font-size:12px;"><span><span style="color:#d82c2c">1-0</span>(1-0)</span></div><div class="b dc" style="left:351px;top:629px;width:39px;height:25px;background:#f0f0f0;color:#333;display:flex;align-items:center;justify-content:center;font-size:12px;"><span>5-1</span></div><div class="b dc" style="left:391px;top:629px;width:91px;height:25px;background:#f0f0f0;color:#333;display:flex;align-items:center;justify-content:center;font-size:12px;"><span><span style="color:#333"><span class="k d">圣马力诺</span></span></span></div><div class="b dc" style="left:483px;top:629px;width:50px;height:25px;background:#fef9f5;color:#333;display:flex;align-items:center;justify-content:center;font-size:12px;"><span>0.85</span></div><div class="b dc" style="left:534px;top:629px;width:88px;height:25px;background:#fef9f5;color:#333;display:flex;align-items:center;justify-content:center;font-size:12px;"><span><span class="k d">两球</span></span></div><div class="b dc" style="left:623px;top:629px;width:54px;height:25px;background:#fef9f5;color:#333;display:flex;align-items:center;justify-content:center;font-size:12px;"><span>0.97</span></div><div class="b dc" style="left:678px;top:629px;width:73px;height:25px;background:#eff6fa;color:#333;display:flex;align-items:center;justify-content:center;font-size:12px;"><span>1.13</span></div><div class="b dc" style="left:752px;top:629px;width:59px;height:25px;background:#eff6fa;color:#333;display:flex;align-items:center;justify-content:center;font-size:12px;"><span>7.07</span></div><div class="b dc" style="left:812px;top:629px;width:75px;height:25px;background:#eff6fa;color:#333;display:flex;align-items:center;justify-content:center;font-size:12px;"><span>20.26</span></div><div class="b dc" style="left:888px;top:629px;width:39px;height:25px;background:#f0f0f0;color:#dd2222;display:flex;align-items:center;justify-content:center;font-size:12px;"><span><span class="k">胜</span></span></div><div class="b dc" style="left:928px;top:629px;width:40px;height:25px;background:#f0f0f0;color:#1111bb;display:flex;align-items:center;justify-content:center;font-size:12px;"><span><span class="k">输</span></span></div><div class="b dc" style="left:969px;top:629px;width:60px;height:25px;background:#f0f0f0;color:#1111aa;display:flex;align-items:center;justify-content:center;font-size:12px;"><span><span class="k">小</span></span></div><div class="b" style="left:2px;top:654px;width:1028px;height:1px;background:#c2c2c2;"></div><div class="b" style="left:2px;top:654px;width:1px;height:27px;background:#c2c2c2;"></div><div class="b" style="left:83px;top:654px;width:1px;height:27px;background:#c2c2c2;"></div><div class="b" style="left:163px;top:654px;width:1px;height:27px;background:#c2c2c2;"></div><div class="b" style="left:255px;top:654px;width:1px;height:27px;background:#c2c2c2;"></div><div class="b" style="left:350px;top:654px;width:1px;height:27px;background:#c2c2c2;"></div><div class="b" style="left:390px;top:654px;width:1px;height:27px;background:#c2c2c2;"></div><div class="b" style="left:482px;top:654px;width:1px;height:27px;background:#c2c2c2;"></div><div class="b" style="left:533px;top:654px;width:1px;height:27px;background:#c2c2c2;"></div><div class="b" style="left:622px;top:654px;width:1px;height:27px;background:#c2c2c2;"></div><div class="b" style="left:677px;top:654px;width:1px;height:27px;background:#c2c2c2;"></div><div class="b" style="left:751px;top:654px;width:1px;height:27px;background:#c2c2c2;"></div><div class="b" style="left:811px;top:654px;width:1px;height:27px;background:#c2c2c2;"></div><div class="b" style="left:887px;top:654px;width:1px;height:27px;background:#c2c2c2;"></div><div class="b" style="left:927px;top:654px;width:1px;height:27px;background:#c2c2c2;"></div><div class="b" style="left:968px;top:654px;width:1px;height:27px;background:#c2c2c2;"></div><div class="b" style="left:1029px;top:654px;width:1px;height:27px;background:#c2c2c2;"></div><div class="b dc w" style="left:3px;top:655px;width:80px;height:25px;background:#fa9c0c;color:#fff;display:flex;align-items:center;justify-content:center;font-size:12px;-webkit-text-stroke:0.25px #fff;"><span><span class="k">欧国联</span></span></div><div class="b" style="left:83px;top:655px;width:1px;height:25px;background:#dba050;"></div><div class="b" style="left:3px;top:654px;width:81px;height:1px;background:#c3b19b;"></div><div class="b dc" style="left:84px;top:655px;width:79px;height:25px;background:#ffffff;color:#333;display:flex;align-items:center;justify-content:center;font-size:12px;"><span>24-09-08</span></div><div class="b dc" style="left:164px;top:655px;width:91px;height:25px;background:#ffffff;color:#333;display:flex;align-items:center;justify-content:center;font-size:12px;"><span><span style="color:#1a7a1a"><span class="k">摩尔多瓦</span></span></span></div><div class="b dc" style="left:256px;top:655px;width:94px;height:25px;background:#ffffff;color:#333;display:flex;align-items:center;justify-content:center;font-size:12px;"><span><span style="color:#d82c2c">2-0</span>(2-0)</span></div><div class="b dc" style="left:351px;top:655px;width:39px;height:25px;background:#ffffff;color:#333;display:flex;align-items:center;justify-content:center;font-size:12px;"><span>3-0</span></div><div class="b dc" style="left:391px;top:655px;width:91px;height:25px;background:#ffffff;color:#333;display:flex;align-items:center;justify-content:center;font-size:12px;"><span><span style="color:#333"><span class="k d">马耳他</span></span></span></div><div class="b dc" style="left:483px;top:655px;width:50px;height:25px;background:#fef9f5;color:#333;display:flex;align-items:center;justify-content:center;font-size:12px;"><span>0.91</span></div><div class="b dc" style="left:534px;top:655px;width:88px;height:25px;background:#fef9f5;color:#333;display:flex;align-items:center;justify-content:center;font-size:12px;"><span><span class="k d">半球</span></span></div><div class="b dc" style="left:623px;top:655px;width:54px;height:25px;background:#fef9f5;color:#333;display:flex;align-items:center;justify-content:center;font-size:12px;"><span>0.98</span></div><div class="b dc" style="left:678px;top:655px;width:73px;height:25px;background:#eff6fa;color:#333;display:flex;align-items:center;justify-content:center;font-size:12px;"><span>1.88</span></div><div class="b dc" style="left:752px;top:655px;width:59px;height:25px;background:#eff6fa;color:#333;display:flex;align-items:center;justify-content:center;font-size:12px;"><span>3.13</span></div><div class="b dc" style="left:812px;top:655px;width:75px;height:25px;background:#eff6fa;color:#333;display:flex;align-items:center;justify-content:center;font-size:12px;"><span>4.66</span></div><div class="b dc" style="left:888px;top:655px;width:39px;height:25px;background:#ffffff;color:#dd2222;display:flex;align-items:center;justify-content:center;font-size:12px;"><span><span class="k">胜</span></span></div><div class="b dc" style="left:928px;top:655px;width:40px;height:25px;background:#ffffff;color:#dd2222;display:flex;align-items:center;justify-content:center;font-size:12px;"><span><span class="k">赢</span></span></div><div class="b dc" style="left:969px;top:655px;width:60px;height:25px;background:#ffffff;color:#cc2222;display:flex;align-items:center;justify-content:center;font-size:12px;"><span><span class="k">大</span></span></div><div class="b" style="left:2px;top:680px;width:1028px;height:1px;background:#c2c2c2;"></div><div class="b" style="left:2px;top:680px;width:1px;height:27px;background:#c2c2c2;"></div><div class="b" style="left:83px;top:680px;width:1px;height:27px;background:#c2c2c2;"></div><div class="b" style="left:163px;top:680px;width:1px;height:27px;background:#c2c2c2;"></div><div class="b" style="left:255px;top:680px;width:1px;height:27px;background:#c2c2c2;"></div><div class="b" style="left:350px;top:680px;width:1px;height:27px;background:#c2c2c2;"></div><div class="b" style="left:390px;top:680px;width:1px;height:27px;background:#c2c2c2;"></div><div class="b" style="left:482px;top:680px;width:1px;height:27px;background:#c2c2c2;"></div><div class="b" style="left:533px;top:680px;width:1px;height:27px;background:#c2c2c2;"></div><div class="b" style="left:622px;top:680px;width:1px;height:27px;background:#c2c2c2;"></div><div class="b" style="left:677px;top:680px;width:1px;height:27px;background:#c2c2c2;"></div><div class="b" style="left:751px;top:680px;width:1px;height:27px;background:#c2c2c2;"></div><div class="b" style="left:811px;top:680px;width:1px;height:27px;background:#c2c2c2;"></div><div class="b" style="left:887px;top:680px;width:1px;height:27px;background:#c2c2c2;"></div><div class="b" style="left:927px;top:680px;width:1px;height:27px;background:#c2c2c2;"></div><div class="b" style="left:968px;top:680px;width:1px;height:27px;background:#c2c2c2;"></div><div class="b" style="left:1029px;top:680px;width:1px;height:27px;background:#c2c2c2;"></div><div class="b dc w" style="left:3px;top:681px;width:80px;height:25px;background:#4666b8;color:#fff;display:flex;align-items:center;justify-content:center;font-size:12px;-webkit-text-stroke:0.25px #fff;"><span><span class="k">国际友谊</span></span></div><div class="b" style="left:83px;top:681px;width:1px;height:25px;background:#8090c0;"></div><div class="b" style="left:3px;top:680px;width:81px;height:1px;background:#c3b19b;"></div><div class="b dc" style="left:84px;top:681px;width:79px;height:25px;background:#f0f0f0;color:#333;display:flex;align-items:center;justify-content:center;font-size:12px;"><span>24-06-11</span></div><div class="b dc" style="left:164px;top:681px;width:91px;height:25px;background:#f0f0f0;color:#333;display:flex;align-items:center;justify-content:center;font-size:12px;"><span><span style="color:#1a7a1a"><span class="k">摩尔多瓦</span></span></span></div><div class="b dc" style="left:256px;top:681px;width:94px;height:25px;background:#f0f0f0;color:#333;display:flex;align-items:center;justify-content:center;font-size:12px;"><span><span style="color:#d82c2c">0-4</span>(0-2)</span></div><div class="b dc" style="left:351px;top:681px;width:39px;height:25px;background:#f0f0f0;color:#333;display:flex;align-items:center;justify-content:center;font-size:12px;"><span>5-3</span></div><div class="b dc" style="left:391px;top:681px;width:91px;height:25px;background:#f0f0f0;color:#333;display:flex;align-items:center;justify-content:center;font-size:12px;"><span><span style="color:#333"><span class="k d">乌克兰</span></span></span></div><div class="b dc" style="left:483px;top:681px;width:50px;height:25px;background:#fef9f5;color:#333;display:flex;align-items:center;justify-content:center;font-size:12px;"><span>1.00</span></div><div class="b dc" style="left:534px;top:681px;width:88px;height:25px;background:#fef9f5;color:#333;display:flex;align-items:center;justify-content:center;font-size:12px;"><span><span class="k d">受一球</span></span></div><div class="b dc" style="left:623px;top:681px;width:54px;height:25px;background:#fef9f5;color:#333;display:flex;align-items:center;justify-content:center;font-size:12px;"><span>0.88</span></div><div class="b dc" style="left:678px;top:681px;width:73px;height:25px;background:#eff6fa;color:#333;display:flex;align-items:center;justify-content:center;font-size:12px;"><span>6.57</span></div><div class="b dc" style="left:752px;top:681px;width:59px;height:25px;background:#eff6fa;color:#333;display:flex;align-items:center;justify-content:center;font-size:12px;"><span>4.12</span></div><div class="b dc" style="left:812px;top:681px;width:75px;height:25px;background:#eff6fa;color:#333;display:flex;align-items:center;justify-content:center;font-size:12px;"><span>1.48</span></div><div class="b dc" style="left:888px;top:681px;width:39px;height:25px;background:#f0f0f0;color:#1111aa;display:flex;align-items:center;justify-content:center;font-size:12px;"><span><span class="k">负</span></span></div><div class="b dc" style="left:928px;top:681px;width:40px;height:25px;background:#f0f0f0;color:#1111bb;display:flex;align-items:center;justify-content:center;font-size:12px;"><span><span class="k">输</span></span></div><div class="b dc" style="left:969px;top:681px;width:60px;height:25px;background:#f0f0f0;color:#cc2222;display:flex;align-items:center;justify-content:center;font-size:12px;"><span><span class="k">大</span></span></div><div class="b" style="left:2px;top:706px;width:1028px;height:1px;background:#c2c2c2;"></div><div class="b" style="left:2px;top:707px;width:1028px;height:25px;background:#fff;"></div><div class="b" style="left:2px;top:706px;width:1px;height:27px;background:#c2c2c2;"></div><div class="b" style="left:1029px;top:706px;width:1px;height:27px;background:#c2c2c2;"></div><div class="b" style="left:2px;top:732px;width:1028px;height:1px;background:#c2c2c2;"></div><div class="b" style="left:2px;top:708px;width:1028px;height:25px;display:flex;align-items:center;justify-content:center;color:#333;font-size:12px;letter-spacing:0.2px;"><span><span class="k">近</span><span style="color:#dd2a2a">10</span><span class="k">场</span>,<span class="k">胜</span>4<span class="k">平</span>1<span class="k">负</span>5, <span class="k">胜率</span>:<span style="color:#dd2a2a">40%</span> <span class="k">让胜率</span>:<span style="color:#dd2a2a">30%</span> <span class="k">大率</span>:<span style="color:#dd2a2a">50%</span> <span class="k">单率</span>:<span style="color:#dd2a2a">50%</span></span></div>
</body></html>
